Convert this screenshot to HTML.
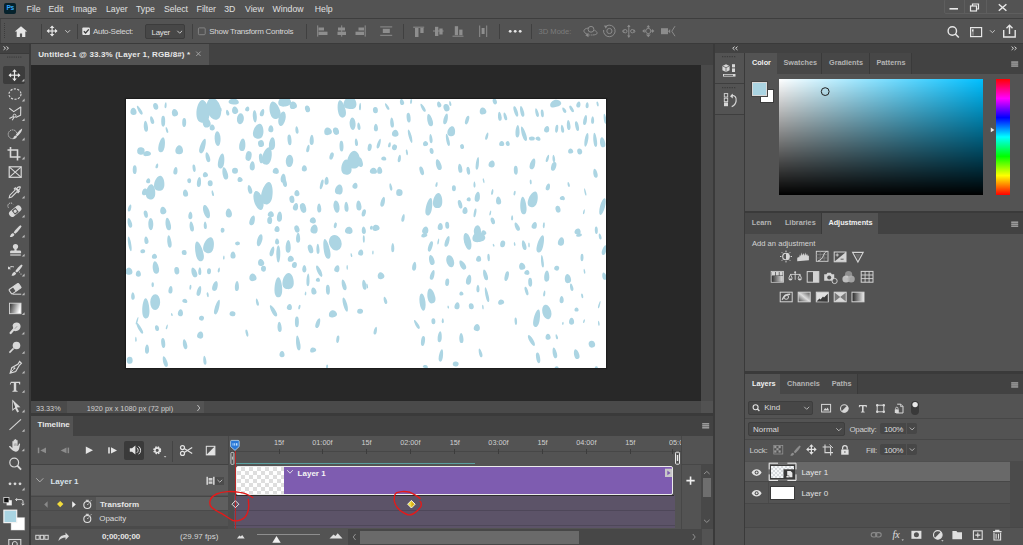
<!DOCTYPE html><html><head><meta charset="utf-8"><style>
*{margin:0;padding:0;box-sizing:border-box}
html,body{width:1023px;height:545px;overflow:hidden;background:#535353;font-family:"Liberation Sans",sans-serif;color:#d8d8d8}
.ab{position:absolute}
.t{position:absolute;white-space:nowrap;line-height:1}
#ov{position:absolute;left:0;top:0;overflow:visible}
</style></head><body>
<div class="ab" style="left:0px;top:0px;width:1023px;height:18px;background:#535353;"></div>
<div class="ab" style="left:0px;top:18px;width:1023px;height:1px;background:#3e3e3e;"></div>
<div class="ab" style="left:4px;top:3px;width:11.8px;height:10.8px;background:#06222c;border-radius:2px"></div>
<div class="ab" style="left:943.5px;top:-1px;width:80px;height:14.5px;background:transparent;border:1px solid #5e5e5e;border-radius:2px"></div>
<div class="ab" style="left:964px;top:0px;width:1px;height:13px;background:#5e5e5e;"></div>
<div class="ab" style="left:985.5px;top:0px;width:1px;height:13px;background:#5e5e5e;"></div>
<div class="ab" style="left:0px;top:19px;width:1023px;height:24px;background:#535353;"></div>
<div class="ab" style="left:0px;top:43px;width:1023px;height:1px;background:#3a3a3a;"></div>
<div class="ab" style="left:0px;top:19px;width:1px;height:24px;background:#444444;"></div>
<div class="ab" style="left:40.5px;top:23.5px;width:1px;height:15.5px;background:#404040;"></div>
<div class="ab" style="left:76.6px;top:23.5px;width:1px;height:15.5px;background:#404040;"></div>
<div class="ab" style="left:192px;top:23.5px;width:1px;height:15.5px;background:#404040;"></div>
<div class="ab" style="left:305.9px;top:23.5px;width:1px;height:15.5px;background:#404040;"></div>
<div class="ab" style="left:402.6px;top:23.5px;width:1px;height:15.5px;background:#404040;"></div>
<div class="ab" style="left:499.4px;top:23.5px;width:1px;height:15.5px;background:#404040;"></div>
<div class="ab" style="left:531.3px;top:23.5px;width:1px;height:15.5px;background:#404040;"></div>
<div class="ab" style="left:144.8px;top:24.3px;width:40.6px;height:15.2px;background:#474747;border:1px solid #3c3c3c;border-radius:2px"></div>
<div class="ab" style="left:0px;top:44px;width:29px;height:9px;background:#424242;"></div>
<div class="ab" style="left:0px;top:53px;width:29px;height:1px;background:#3a3a3a;"></div>
<div class="ab" style="left:29px;top:44px;width:2px;height:501px;background:#3a3a3a;"></div>
<div class="ab" style="left:31px;top:44px;width:682px;height:21px;background:#424242;"></div>
<div class="ab" style="left:31px;top:44px;width:178px;height:21px;background:#535353;"></div>
<div class="ab" style="left:31px;top:65px;width:682px;height:336px;background:#282828;"></div>
<div class="ab" style="left:126px;top:99px;width:480px;height:269px;background:#ffffff;box-shadow:0 0 1px 1px #1c1c1c"></div>
<svg class="ab" style="left:0;top:0" width="1023" height="545"><defs><clipPath id="cv"><rect x="126" y="99" width="480" height="269"/></clipPath></defs><g clip-path="url(#cv)" fill="#acd5e3"><path d="M133.43 107.85C134.98 107.85 136.52 109.97 136.52 112.27C136.52 114.21 135.13 114.92 133.43 114.92C131.73 114.92 130.34 114.21 130.34 112.27C130.34 109.97 131.88 107.85 133.43 107.85z" transform="rotate(-6 133.4 111.4)"/><path d="M139.62 105.09C140.40 105.09 141.17 108.12 141.17 111.41C141.17 114.19 140.47 115.20 139.62 115.20C138.77 115.20 138.08 114.19 138.08 111.41C138.08 108.12 138.85 105.09 139.62 105.09z" transform="rotate(-30 139.6 110.1)"/><ellipse cx="155.7" cy="106.4" rx="2.48" ry="3.47" transform="rotate(-13 155.7 106.4)"/><path d="M165.63 102.16C166.14 102.16 166.66 103.98 166.66 105.95C166.66 107.62 166.20 108.22 165.63 108.22C165.06 108.22 164.60 107.62 164.60 105.95C164.60 103.98 165.11 102.16 165.63 102.16z" transform="rotate(5 165.6 105.2)"/><path d="M174.79 108.83C176.34 108.83 177.88 111.11 177.88 113.57C177.88 115.65 176.49 116.41 174.79 116.41C173.09 116.41 171.70 115.65 171.70 113.57C171.70 111.11 173.25 108.83 174.79 108.83z" transform="rotate(-15 174.8 112.6)"/><ellipse cx="184.2" cy="122.5" rx="1.98" ry="4.46" transform="rotate(1 184.2 122.5)"/><path d="M145.81 120.69C146.84 120.69 147.87 124.02 147.87 127.63C147.87 130.69 146.95 131.80 145.81 131.80C144.68 131.80 143.75 130.69 143.75 127.63C143.75 124.02 144.78 120.69 145.81 120.69z" transform="rotate(-5 145.8 126.2)"/><path d="M152.01 116.01C152.91 116.01 153.81 118.44 153.81 121.06C153.81 123.29 153.00 124.09 152.01 124.09C151.01 124.09 150.20 123.29 150.20 121.06C150.20 118.44 151.10 116.01 152.01 116.01z" transform="rotate(-16 152.0 120.1)"/><ellipse cx="163.2" cy="121.3" rx="1.98" ry="5.45" transform="rotate(0 163.2 121.3)"/><path d="M166.87 126.93C167.38 126.93 167.90 128.75 167.90 130.72C167.90 132.39 167.43 132.99 166.87 132.99C166.30 132.99 165.84 132.39 165.84 130.72C165.84 128.75 166.35 126.93 166.87 126.93z" transform="rotate(-17 166.9 130.0)"/><path d="M202.78 100.02C206.00 100.02 209.22 106.84 209.22 114.23C209.22 120.48 206.32 122.75 202.78 122.75C199.24 122.75 196.34 120.48 196.34 114.23C196.34 106.84 199.56 100.02 202.78 100.02z" transform="rotate(-2 202.8 111.4)"/><ellipse cx="213.9" cy="108.9" rx="6.93" ry="11.15" transform="rotate(-15 213.9 108.9)"/><path d="M206.50 117.48C208.43 117.48 210.36 120.51 210.36 123.79C210.36 126.57 208.62 127.58 206.50 127.58C204.37 127.58 202.63 126.57 202.63 123.79C202.63 120.51 204.56 117.48 206.50 117.48z" transform="rotate(-15 206.5 122.5)"/><path d="M212.19 124.45C213.48 124.45 214.77 126.27 214.77 128.24C214.77 129.91 213.61 130.51 212.19 130.51C210.78 130.51 209.62 129.91 209.62 128.24C209.62 126.27 210.90 124.45 212.19 124.45z" transform="rotate(-3 212.2 127.5)"/><ellipse cx="220.1" cy="110.1" rx="1.49" ry="2.48" transform="rotate(12 220.1 110.1)"/><path d="M227.55 109.59C228.32 109.59 229.09 111.41 229.09 113.38C229.09 115.05 228.40 115.65 227.55 115.65C226.70 115.65 226.00 115.05 226.00 113.38C226.00 111.41 226.78 109.59 227.55 109.59z" transform="rotate(-14 227.5 112.6)"/><path d="M234.98 106.36C236.52 106.36 238.07 108.63 238.07 111.09C238.07 113.18 236.68 113.93 234.98 113.93C233.28 113.93 231.89 113.18 231.89 111.09C231.89 108.63 233.43 106.36 234.98 106.36z" transform="rotate(-10 235.0 110.1)"/><ellipse cx="240.4" cy="118.8" rx="3.47" ry="5.45" transform="rotate(5 240.4 118.8)"/><path d="M247.36 106.38C248.39 106.38 249.42 107.90 249.42 109.54C249.42 110.93 248.50 111.43 247.36 111.43C246.23 111.43 245.30 110.93 245.30 109.54C245.30 107.90 246.33 106.38 247.36 106.38z" transform="rotate(16 247.4 108.9)"/><path d="M233.74 98.45C236.32 98.45 238.89 100.26 238.89 102.23C238.89 103.90 236.57 104.51 233.74 104.51C230.91 104.51 228.59 103.90 228.59 102.23C228.59 100.26 231.16 98.45 233.74 98.45z" transform="rotate(3 233.7 101.5)"/><ellipse cx="254.8" cy="116.3" rx="1.98" ry="6.19" transform="rotate(-4 254.8 116.3)"/><path d="M262.22 108.83C263.25 108.83 264.28 111.11 264.28 113.57C264.28 115.65 263.36 116.41 262.22 116.41C261.09 116.41 260.16 115.65 260.16 113.57C260.16 111.11 261.19 108.83 262.22 108.83z" transform="rotate(17 262.2 112.6)"/><path d="M274.61 101.30C277.18 101.30 279.76 106.61 279.76 112.36C279.76 117.22 277.44 118.99 274.61 118.99C271.77 118.99 269.46 117.22 269.46 112.36C269.46 106.61 272.03 101.30 274.61 101.30z" transform="rotate(-16 274.6 110.1)"/><ellipse cx="282.0" cy="118.8" rx="3.47" ry="7.43" transform="rotate(13 282.0 118.8)"/><path d="M284.51 96.42C287.73 96.42 290.95 99.46 290.95 102.74C290.95 105.52 288.06 106.53 284.51 106.53C280.97 106.53 278.07 105.52 278.07 102.74C278.07 99.46 281.29 96.42 284.51 96.42z" transform="rotate(-8 284.5 101.5)"/><path d="M293.18 101.40C294.99 101.40 296.79 103.68 296.79 106.14C296.79 108.22 295.17 108.98 293.18 108.98C291.20 108.98 289.58 108.22 289.58 106.14C289.58 103.68 291.38 101.40 293.18 101.40z" transform="rotate(-13 293.2 105.2)"/><ellipse cx="307.5" cy="108.9" rx="2.48" ry="3.47" transform="rotate(-14 307.5 108.9)"/><path d="M296.90 126.17C297.67 126.17 298.44 128.44 298.44 130.91C298.44 132.99 297.75 133.75 296.90 133.75C296.05 133.75 295.35 132.99 295.35 130.91C295.35 128.44 296.13 126.17 296.90 126.17z" transform="rotate(-7 296.9 130.0)"/><path d="M258.51 123.62C261.08 123.62 263.66 128.17 263.66 133.09C263.66 137.26 261.34 138.78 258.51 138.78C255.67 138.78 253.36 137.26 253.36 133.09C253.36 128.17 255.93 123.62 258.51 123.62z" transform="rotate(11 258.5 131.2)"/><ellipse cx="261.0" cy="143.6" rx="2.97" ry="3.47" transform="rotate(-11 261.0 143.6)"/><path d="M270.89 125.18C272.18 125.18 273.47 127.31 273.47 129.61C273.47 131.55 272.31 132.26 270.89 132.26C269.47 132.26 268.32 131.55 268.32 129.61C268.32 127.31 269.60 125.18 270.89 125.18z" transform="rotate(3 270.9 128.7)"/><path d="M272.13 137.27C273.68 137.27 275.22 141.06 275.22 145.16C275.22 148.63 273.83 149.90 272.13 149.90C270.43 149.90 269.04 148.63 269.04 145.16C269.04 141.06 270.58 137.27 272.13 137.27z" transform="rotate(5 272.1 143.6)"/><ellipse cx="289.5" cy="139.9" rx="1.98" ry="5.45" transform="rotate(-5 289.5 139.9)"/><path d="M311.76 134.81C312.79 134.81 313.82 137.85 313.82 141.13C313.82 143.91 312.89 144.92 311.76 144.92C310.63 144.92 309.70 143.91 309.70 141.13C309.70 137.85 310.73 134.81 311.76 134.81z" transform="rotate(2 311.8 139.9)"/><path d="M327.86 127.41C329.79 127.41 331.72 129.68 331.72 132.15C331.72 134.23 329.98 134.99 327.86 134.99C325.73 134.99 323.99 134.23 323.99 132.15C323.99 129.68 325.93 127.41 327.86 127.41z" transform="rotate(-16 327.9 131.2)"/><ellipse cx="336.0" cy="131.2" rx="2.97" ry="3.72" transform="rotate(-16 336.0 131.2)"/><path d="M341.48 100.07C343.41 100.07 345.34 105.37 345.34 111.12C345.34 115.98 343.60 117.75 341.48 117.75C339.35 117.75 337.62 115.98 337.62 111.12C337.62 105.37 339.55 100.07 341.48 100.07z" transform="rotate(-11 341.5 108.9)"/><path d="M350.15 96.40C353.37 96.40 356.59 100.19 356.59 104.29C356.59 107.77 353.69 109.03 350.15 109.03C346.61 109.03 343.71 107.77 343.71 104.29C343.71 100.19 346.93 96.40 350.15 96.40z" transform="rotate(6 350.1 102.7)"/><ellipse cx="352.6" cy="123.8" rx="2.97" ry="6.19" transform="rotate(-3 352.6 123.8)"/><path d="M358.82 122.46C359.59 122.46 360.36 124.73 360.36 127.19C360.36 129.28 359.67 130.03 358.82 130.03C357.97 130.03 357.27 129.28 357.27 127.19C357.27 124.73 358.04 122.46 358.82 122.46z" transform="rotate(-7 358.8 126.2)"/><path d="M360.06 102.64C360.57 102.64 361.09 104.91 361.09 107.38C361.09 109.46 360.62 110.22 360.06 110.22C359.49 110.22 359.03 109.46 359.03 107.38C359.03 104.91 359.54 102.64 360.06 102.64z" transform="rotate(3 360.1 106.4)"/><ellipse cx="341.5" cy="146.1" rx="1.98" ry="5.45" transform="rotate(-2 341.5 146.1)"/><path d="M356.34 138.55C357.11 138.55 357.89 140.83 357.89 143.29C357.89 145.38 357.19 146.13 356.34 146.13C355.49 146.13 354.80 145.38 354.80 143.29C354.80 140.83 355.57 138.55 356.34 138.55z" transform="rotate(-7 356.3 142.3)"/><path d="M161.91 137.24C163.46 137.24 165.00 141.79 165.00 146.72C165.00 150.88 163.61 152.40 161.91 152.40C160.21 152.40 158.82 150.88 158.82 146.72C158.82 141.79 160.37 137.24 161.91 137.24z" transform="rotate(11 161.9 144.8)"/><ellipse cx="140.9" cy="151.0" rx="3.72" ry="3.72" transform="rotate(7 140.9 151.0)"/><path d="M147.05 150.96C148.98 150.96 150.92 152.48 150.92 154.12C150.92 155.51 149.18 156.02 147.05 156.02C144.93 156.02 143.19 155.51 143.19 154.12C143.19 152.48 145.12 150.96 147.05 150.96z" transform="rotate(-9 147.1 153.5)"/><path d="M179.25 145.23C181.18 145.23 183.11 147.96 183.11 150.91C183.11 153.41 181.38 154.32 179.25 154.32C177.13 154.32 175.39 153.41 175.39 150.91C175.39 147.96 177.32 145.23 179.25 145.23z" transform="rotate(3 179.3 149.8)"/><ellipse cx="134.7" cy="169.6" rx="1.98" ry="4.46" transform="rotate(1 134.7 169.6)"/><path d="M156.96 163.35C157.60 163.35 158.25 164.86 158.25 166.50C158.25 167.89 157.67 168.40 156.96 168.40C156.25 168.40 155.67 167.89 155.67 166.50C155.67 164.86 156.32 163.35 156.96 163.35z" transform="rotate(14 157.0 165.9)"/><path d="M175.54 167.04C176.57 167.04 177.60 169.31 177.60 171.77C177.60 173.86 176.67 174.62 175.54 174.62C174.40 174.62 173.47 173.86 173.47 171.77C173.47 169.31 174.51 167.04 175.54 167.04z" transform="rotate(8 175.5 170.8)"/><ellipse cx="194.1" cy="168.3" rx="1.49" ry="3.72" transform="rotate(-8 194.1 168.3)"/><path d="M202.78 138.48C204.07 138.48 205.36 143.03 205.36 147.95C205.36 152.12 204.20 153.64 202.78 153.64C201.36 153.64 200.20 152.12 200.20 147.95C200.20 143.03 201.49 138.48 202.78 138.48z" transform="rotate(17 202.8 146.1)"/><path d="M207.73 152.15C208.76 152.15 209.79 155.18 209.79 158.47C209.79 161.25 208.87 162.26 207.73 162.26C206.60 162.26 205.67 161.25 205.67 158.47C205.67 155.18 206.70 152.15 207.73 152.15z" transform="rotate(-14 207.7 157.2)"/><ellipse cx="217.6" cy="138.6" rx="2.97" ry="7.43" transform="rotate(-3 217.6 138.6)"/><path d="M221.36 153.34C222.90 153.34 224.45 157.89 224.45 162.81C224.45 166.98 223.06 168.50 221.36 168.50C219.66 168.50 218.27 166.98 218.27 162.81C218.27 157.89 219.81 153.34 221.36 153.34z" transform="rotate(9 221.4 160.9)"/><path d="M225.07 166.99C226.36 166.99 227.65 170.78 227.65 174.88C227.65 178.36 226.49 179.62 225.07 179.62C223.65 179.62 222.50 178.36 222.50 174.88C222.50 170.78 223.78 166.99 225.07 166.99z" transform="rotate(-13 225.1 173.3)"/><ellipse cx="235.0" cy="170.8" rx="2.97" ry="2.97" transform="rotate(-0 235.0 170.8)"/><path d="M239.93 176.97C241.22 176.97 242.51 178.48 242.51 180.13C242.51 181.52 241.35 182.02 239.93 182.02C238.52 182.02 237.36 181.52 237.36 180.13C237.36 178.48 238.64 176.97 239.93 176.97z" transform="rotate(-17 239.9 179.5)"/><path d="M242.41 138.50C243.95 138.50 245.50 142.29 245.50 146.40C245.50 149.87 244.11 151.14 242.41 151.14C240.71 151.14 239.32 149.87 239.32 146.40C239.32 142.29 240.86 138.50 242.41 138.50z" transform="rotate(6 242.4 144.8)"/><ellipse cx="248.6" cy="156.0" rx="2.97" ry="4.95" transform="rotate(10 248.6 156.0)"/><path d="M252.32 161.33C253.60 161.33 254.89 164.05 254.89 167.01C254.89 169.51 253.73 170.42 252.32 170.42C250.90 170.42 249.74 169.51 249.74 167.01C249.74 164.05 251.03 161.33 252.32 161.33z" transform="rotate(3 252.3 165.9)"/><path d="M267.18 147.12C269.49 147.12 271.81 152.43 271.81 158.18C271.81 163.04 269.73 164.81 267.18 164.81C264.63 164.81 262.54 163.04 262.54 158.18C262.54 152.43 264.86 147.12 267.18 147.12z" transform="rotate(14 267.2 156.0)"/><ellipse cx="261.0" cy="158.4" rx="1.98" ry="4.95" transform="rotate(-7 261.0 158.4)"/><path d="M275.85 167.80C277.39 167.80 278.94 169.61 278.94 171.58C278.94 173.25 277.55 173.86 275.85 173.86C274.15 173.86 272.75 173.25 272.75 171.58C272.75 169.61 274.30 167.80 275.85 167.80z" transform="rotate(7 275.8 170.8)"/><path d="M283.28 173.71C284.56 173.71 285.85 176.44 285.85 179.39C285.85 181.89 284.69 182.80 283.28 182.80C281.86 182.80 280.70 181.89 280.70 179.39C280.70 176.44 281.99 173.71 283.28 173.71z" transform="rotate(3 283.3 178.3)"/><ellipse cx="289.5" cy="160.9" rx="3.72" ry="6.19" transform="rotate(3 289.5 160.9)"/><path d="M304.33 165.32C305.62 165.32 306.90 167.14 306.90 169.11C306.90 170.78 305.74 171.38 304.33 171.38C302.91 171.38 301.75 170.78 301.75 169.11C301.75 167.14 303.04 165.32 304.33 165.32z" transform="rotate(-2 304.3 168.3)"/><path d="M308.04 144.75C308.82 144.75 309.59 147.02 309.59 149.48C309.59 151.57 308.89 152.33 308.04 152.33C307.19 152.33 306.50 151.57 306.50 149.48C306.50 147.02 307.27 144.75 308.04 144.75z" transform="rotate(12 308.0 148.5)"/><ellipse cx="331.6" cy="156.0" rx="1.98" ry="3.72" transform="rotate(16 331.6 156.0)"/><path d="M346.43 159.53C349.01 159.53 351.59 164.08 351.59 169.01C351.59 173.17 349.27 174.69 346.43 174.69C343.60 174.69 341.28 173.17 341.28 169.01C341.28 164.08 343.86 159.53 346.43 159.53z" transform="rotate(-1 346.4 167.1)"/><path d="M353.86 150.84C357.08 150.84 360.30 156.14 360.30 161.89C360.30 166.75 357.41 168.52 353.86 168.52C350.32 168.52 347.42 166.75 347.42 161.89C347.42 156.14 350.64 150.84 353.86 150.84z" transform="rotate(6 353.9 159.7)"/><ellipse cx="360.1" cy="162.2" rx="2.48" ry="4.95" transform="rotate(-16 360.1 162.2)"/><path d="M159.44 175.63C162.01 175.63 164.59 180.18 164.59 185.11C164.59 189.27 162.27 190.79 159.44 190.79C156.60 190.79 154.28 189.27 154.28 185.11C154.28 180.18 156.86 175.63 159.44 175.63z" transform="rotate(7 159.4 183.2)"/><path d="M150.77 184.30C153.09 184.30 155.40 188.85 155.40 193.77C155.40 197.94 153.32 199.46 150.77 199.46C148.22 199.46 146.13 197.94 146.13 193.77C146.13 188.85 148.45 184.30 150.77 184.30z" transform="rotate(5 150.8 191.9)"/><ellipse cx="144.6" cy="191.9" rx="2.48" ry="3.47" transform="rotate(18 144.6 191.9)"/><path d="M148.29 178.21C149.32 178.21 150.35 179.72 150.35 181.37C150.35 182.75 149.42 183.26 148.29 183.26C147.16 183.26 146.23 182.75 146.23 181.37C146.23 179.72 147.26 178.21 148.29 178.21z" transform="rotate(12 148.3 180.7)"/><path d="M185.44 189.58C186.73 189.58 188.02 191.70 188.02 194.00C188.02 195.95 186.86 196.65 185.44 196.65C184.03 196.65 182.87 195.95 182.87 194.00C182.87 191.70 184.15 189.58 185.44 189.58z" transform="rotate(-8 185.4 193.1)"/><ellipse cx="189.2" cy="180.7" rx="1.98" ry="2.48" transform="rotate(-4 189.2 180.7)"/><path d="M199.07 176.92C200.10 176.92 201.13 179.95 201.13 183.24C201.13 186.01 200.20 187.02 199.07 187.02C197.93 187.02 197.00 186.01 197.00 183.24C197.00 179.95 198.03 176.92 199.07 176.92z" transform="rotate(6 199.1 182.0)"/><path d="M205.26 172.02C206.54 172.02 207.83 173.53 207.83 175.17C207.83 176.56 206.67 177.07 205.26 177.07C203.84 177.07 202.68 176.56 202.68 175.17C202.68 173.53 203.97 172.02 205.26 172.02z" transform="rotate(-17 205.3 174.5)"/><ellipse cx="210.2" cy="183.2" rx="2.48" ry="2.97" transform="rotate(-1 210.2 183.2)"/><path d="M212.69 190.09C213.20 190.09 213.72 191.91 213.72 193.88C213.72 195.54 213.25 196.15 212.69 196.15C212.12 196.15 211.66 195.54 211.66 193.88C211.66 191.91 212.17 190.09 212.69 190.09z" transform="rotate(-12 212.7 193.1)"/><path d="M249.84 184.86C250.87 184.86 251.90 187.58 251.90 190.54C251.90 193.04 250.97 193.95 249.84 193.95C248.71 193.95 247.78 193.04 247.78 190.54C247.78 187.58 248.81 184.86 249.84 184.86z" transform="rotate(-14 249.8 189.4)"/><ellipse cx="258.5" cy="200.5" rx="4.46" ry="9.91" transform="rotate(-16 258.5 200.5)"/><path d="M267.18 181.75C270.01 181.75 272.84 188.57 272.84 195.96C272.84 202.21 270.29 204.49 267.18 204.49C264.06 204.49 261.51 202.21 261.51 195.96C261.51 188.57 264.34 181.75 267.18 181.75z" transform="rotate(10 267.2 193.1)"/><path d="M284.51 176.92C285.54 176.92 286.57 179.95 286.57 183.24C286.57 186.01 285.65 187.02 284.51 187.02C283.38 187.02 282.45 186.01 282.45 183.24C282.45 179.95 283.48 176.92 284.51 176.92z" transform="rotate(-13 284.5 182.0)"/><ellipse cx="291.9" cy="199.3" rx="2.48" ry="3.72" transform="rotate(-9 291.9 199.3)"/><path d="M296.90 190.09C298.19 190.09 299.47 191.91 299.47 193.88C299.47 195.54 298.31 196.15 296.90 196.15C295.48 196.15 294.32 195.54 294.32 193.88C294.32 191.91 295.61 190.09 296.90 190.09z" transform="rotate(-4 296.9 193.1)"/><path d="M295.66 202.95C296.95 202.95 298.24 205.22 298.24 207.69C298.24 209.77 297.08 210.53 295.66 210.53C294.24 210.53 293.08 209.77 293.08 207.69C293.08 205.22 294.37 202.95 295.66 202.95z" transform="rotate(13 295.7 206.7)"/><ellipse cx="303.1" cy="208.0" rx="2.97" ry="4.95" transform="rotate(-15 303.1 208.0)"/><path d="M319.19 203.43C320.22 203.43 321.25 206.16 321.25 209.12C321.25 211.62 320.32 212.53 319.19 212.53C318.06 212.53 317.13 211.62 317.13 209.12C317.13 206.16 318.16 203.43 319.19 203.43z" transform="rotate(-2 319.2 208.0)"/><path d="M326.62 176.69C327.65 176.69 328.68 179.12 328.68 181.74C328.68 183.97 327.75 184.78 326.62 184.78C325.49 184.78 324.56 183.97 324.56 181.74C324.56 179.12 325.59 176.69 326.62 176.69z" transform="rotate(2 326.6 180.7)"/><ellipse cx="321.7" cy="184.4" rx="1.49" ry="4.95" transform="rotate(14 321.7 184.4)"/><path d="M339.00 184.35C340.93 184.35 342.87 187.38 342.87 190.67C342.87 193.44 341.13 194.46 339.00 194.46C336.88 194.46 335.14 193.44 335.14 190.67C335.14 187.38 337.07 184.35 339.00 184.35z" transform="rotate(11 339.0 189.4)"/><path d="M355.10 182.66C356.39 182.66 357.68 184.47 357.68 186.45C357.68 188.11 356.52 188.72 355.10 188.72C353.69 188.72 352.53 188.11 352.53 186.45C352.53 184.47 353.81 182.66 355.10 182.66z" transform="rotate(13 355.1 185.7)"/><ellipse cx="336.5" cy="206.7" rx="2.97" ry="6.19" transform="rotate(-8 336.5 206.7)"/><path d="M346.43 201.69C347.46 201.69 348.49 204.72 348.49 208.00C348.49 210.78 347.57 211.79 346.43 211.79C345.30 211.79 344.37 210.78 344.37 208.00C344.37 204.72 345.40 201.69 346.43 201.69z" transform="rotate(-3 346.4 206.7)"/><path d="M358.82 200.45C360.11 200.45 361.39 203.48 361.39 206.76C361.39 209.54 360.23 210.55 358.82 210.55C357.40 210.55 356.24 209.54 356.24 206.76C356.24 203.48 357.53 200.45 358.82 200.45z" transform="rotate(-5 358.8 205.5)"/><ellipse cx="363.8" cy="212.9" rx="1.98" ry="3.72" transform="rotate(14 363.8 212.9)"/><path d="M129.72 204.44C130.49 204.44 131.26 206.56 131.26 208.86C131.26 210.81 130.57 211.52 129.72 211.52C128.87 211.52 128.17 210.81 128.17 208.86C128.17 206.56 128.94 204.44 129.72 204.44z" transform="rotate(16 129.7 208.0)"/><path d="M129.72 217.79C130.75 217.79 131.78 220.82 131.78 224.10C131.78 226.88 130.85 227.89 129.72 227.89C128.58 227.89 127.65 226.88 127.65 224.10C127.65 220.82 128.68 217.79 129.72 217.79z" transform="rotate(-13 129.7 222.8)"/><ellipse cx="145.8" cy="214.2" rx="1.98" ry="3.72" transform="rotate(-12 145.8 214.2)"/><path d="M163.15 206.67C164.70 206.67 166.24 208.94 166.24 211.40C166.24 213.49 164.85 214.24 163.15 214.24C161.45 214.24 160.06 213.49 160.06 211.40C160.06 208.94 161.61 206.67 163.15 206.67z" transform="rotate(-10 163.2 210.5)"/><path d="M168.11 217.76C169.39 217.76 170.68 221.55 170.68 225.66C170.68 229.13 169.52 230.39 168.11 230.39C166.69 230.39 165.53 229.13 165.53 225.66C165.53 221.55 166.82 217.76 168.11 217.76z" transform="rotate(-10 168.1 224.1)"/><ellipse cx="150.8" cy="224.1" rx="2.48" ry="6.19" transform="rotate(-1 150.8 224.1)"/><path d="M190.40 211.62C191.43 211.62 192.46 213.89 192.46 216.36C192.46 218.44 191.53 219.20 190.40 219.20C189.26 219.20 188.34 218.44 188.34 216.36C188.34 213.89 189.37 211.62 190.40 211.62z" transform="rotate(3 190.4 215.4)"/><path d="M191.63 221.50C192.67 221.50 193.70 224.53 193.70 227.82C193.70 230.60 192.77 231.61 191.63 231.61C190.50 231.61 189.57 230.60 189.57 227.82C189.57 224.53 190.60 221.50 191.63 221.50z" transform="rotate(-9 191.6 226.6)"/><ellipse cx="206.5" cy="211.7" rx="2.97" ry="6.93" transform="rotate(-18 206.5 211.7)"/><path d="M205.26 221.53C206.03 221.53 206.80 223.80 206.80 226.26C206.80 228.35 206.11 229.11 205.26 229.11C204.41 229.11 203.71 228.35 203.71 226.26C203.71 223.80 204.48 221.53 205.26 221.53z" transform="rotate(-3 205.3 225.3)"/><path d="M228.79 208.38C230.33 208.38 231.88 211.11 231.88 214.07C231.88 216.57 230.49 217.48 228.79 217.48C227.09 217.48 225.70 216.57 225.70 214.07C225.70 211.11 227.24 208.38 228.79 208.38z" transform="rotate(-5 228.8 212.9)"/><ellipse cx="222.6" cy="230.3" rx="1.98" ry="2.48" transform="rotate(2 222.6 230.3)"/><path d="M252.32 215.31C253.60 215.31 254.89 218.34 254.89 221.63C254.89 224.40 253.73 225.41 252.32 225.41C250.90 225.41 249.74 224.40 249.74 221.63C249.74 218.34 251.03 215.31 252.32 215.31z" transform="rotate(16 252.3 220.4)"/><path d="M270.89 211.14C272.44 211.14 273.98 212.96 273.98 214.93C273.98 216.60 272.59 217.20 270.89 217.20C269.19 217.20 267.80 216.60 267.80 214.93C267.80 212.96 269.35 211.14 270.89 211.14z" transform="rotate(7 270.9 214.2)"/><ellipse cx="269.7" cy="220.4" rx="2.48" ry="3.72" transform="rotate(1 269.7 220.4)"/><path d="M279.56 211.59C280.85 211.59 282.14 214.63 282.14 217.91C282.14 220.69 280.98 221.70 279.56 221.70C278.14 221.70 276.98 220.69 276.98 217.91C276.98 214.63 278.27 211.59 279.56 211.59z" transform="rotate(4 279.6 216.6)"/><path d="M277.08 226.00C278.37 226.00 279.66 227.82 279.66 229.79C279.66 231.46 278.50 232.06 277.08 232.06C275.67 232.06 274.51 231.46 274.51 229.79C274.51 227.82 275.80 226.00 277.08 226.00z" transform="rotate(6 277.1 229.0)"/><ellipse cx="296.9" cy="229.0" rx="2.48" ry="3.72" transform="rotate(-16 296.9 229.0)"/><path d="M313.00 217.33C314.54 217.33 316.09 219.15 316.09 221.12C316.09 222.79 314.70 223.39 313.00 223.39C311.30 223.39 309.91 222.79 309.91 221.12C309.91 219.15 311.45 217.33 313.00 217.33z" transform="rotate(14 313.0 220.4)"/><path d="M314.24 224.48C316.04 224.48 317.84 227.21 317.84 230.17C317.84 232.67 316.22 233.58 314.24 233.58C312.25 233.58 310.63 232.67 310.63 230.17C310.63 227.21 312.43 224.48 314.24 224.48z" transform="rotate(10 314.2 229.0)"/><ellipse cx="335.3" cy="225.3" rx="1.49" ry="2.97" transform="rotate(13 335.3 225.3)"/><path d="M348.91 226.73C350.84 226.73 352.77 228.85 352.77 231.15C352.77 233.10 351.04 233.81 348.91 233.81C346.79 233.81 345.05 233.10 345.05 231.15C345.05 228.85 346.98 226.73 348.91 226.73z" transform="rotate(11 348.9 230.3)"/><path d="M363.77 226.48C364.80 226.48 365.83 228.75 365.83 231.22C365.83 233.30 364.90 234.06 363.77 234.06C362.64 234.06 361.71 233.30 361.71 231.22C361.71 228.75 362.74 226.48 363.77 226.48z" transform="rotate(-4 363.8 230.3)"/><ellipse cx="375.4" cy="110.1" rx="2.48" ry="3.22" transform="rotate(-4 375.4 110.1)"/><path d="M387.05 102.64C387.70 102.64 388.34 104.91 388.34 107.38C388.34 109.46 387.76 110.22 387.05 110.22C386.34 110.22 385.76 109.46 385.76 107.38C385.76 104.91 386.41 102.64 387.05 102.64z" transform="rotate(-30 387.1 106.4)"/><path d="M401.91 98.94C402.94 98.94 403.97 100.76 403.97 102.73C403.97 104.40 403.05 105.00 401.91 105.00C400.78 105.00 399.85 104.40 399.85 102.73C399.85 100.76 400.88 98.94 401.91 98.94z" transform="rotate(-14 401.9 102.0)"/><ellipse cx="411.1" cy="101.5" rx="0.99" ry="2.48" transform="rotate(5 411.1 101.5)"/><path d="M422.97 103.12C423.74 103.12 424.51 105.85 424.51 108.81C424.51 111.31 423.82 112.22 422.97 112.22C422.12 112.22 421.42 111.31 421.42 108.81C421.42 105.85 422.19 103.12 422.97 103.12z" transform="rotate(-30 423.0 107.7)"/><path d="M439.07 101.42C440.10 101.42 441.13 103.24 441.13 105.21C441.13 106.87 440.20 107.48 439.07 107.48C437.93 107.48 437.00 106.87 437.00 105.21C437.00 103.24 438.03 101.42 439.07 101.42z" transform="rotate(-16 439.1 104.4)"/><ellipse cx="446.5" cy="107.7" rx="2.97" ry="3.72" transform="rotate(-16 446.5 107.7)"/><path d="M450.21 100.93C450.73 100.93 451.24 102.45 451.24 104.09C451.24 105.48 450.78 105.98 450.21 105.98C449.64 105.98 449.18 105.48 449.18 104.09C449.18 102.45 449.70 100.93 450.21 100.93z" transform="rotate(-10 450.2 103.5)"/><path d="M482.90 107.35C484.58 107.35 486.25 109.47 486.25 111.77C486.25 113.72 484.75 114.43 482.90 114.43C481.06 114.43 479.56 113.72 479.56 111.77C479.56 109.47 481.23 107.35 482.90 107.35z" transform="rotate(-12 482.9 110.9)"/><ellipse cx="494.8" cy="101.5" rx="1.98" ry="2.97" transform="rotate(-20 494.8 101.5)"/><path d="M499.75 111.79C500.65 111.79 501.55 114.52 501.55 117.47C501.55 119.98 500.74 120.88 499.75 120.88C498.75 120.88 497.94 119.98 497.94 117.47C497.94 114.52 498.84 111.79 499.75 111.79z" transform="rotate(-6 499.7 116.3)"/><path d="M505.20 112.30C505.97 112.30 506.74 114.72 506.74 117.35C506.74 119.57 506.05 120.38 505.20 120.38C504.35 120.38 503.65 119.57 503.65 117.35C503.65 114.72 504.42 112.30 505.20 112.30z" transform="rotate(-16 505.2 116.3)"/><ellipse cx="515.8" cy="111.4" rx="1.73" ry="5.45" transform="rotate(-18 515.8 111.4)"/><path d="M522.04 105.83C522.94 105.83 523.84 109.16 523.84 112.77C523.84 115.83 523.03 116.94 522.04 116.94C521.05 116.94 520.23 115.83 520.23 112.77C520.23 109.16 521.14 105.83 522.04 105.83z" transform="rotate(-13 522.0 111.4)"/><path d="M536.90 108.07C537.67 108.07 538.44 110.80 538.44 113.76C538.44 116.26 537.75 117.17 536.90 117.17C536.05 117.17 535.35 116.26 535.35 113.76C535.35 110.80 536.13 108.07 536.90 108.07z" transform="rotate(-14 536.9 112.6)"/><ellipse cx="542.3" cy="113.4" rx="1.49" ry="3.96" transform="rotate(-5 542.3 113.4)"/><path d="M555.47 99.92C558.31 99.92 561.14 102.04 561.14 104.34C561.14 106.29 558.59 107.00 555.47 107.00C552.36 107.00 549.81 106.29 549.81 104.34C549.81 102.04 552.64 99.92 555.47 99.92z" transform="rotate(-17 555.5 103.5)"/><path d="M564.14 107.11C564.92 107.11 565.69 108.93 565.69 110.90C565.69 112.57 564.99 113.18 564.14 113.18C563.29 113.18 562.60 112.57 562.60 110.90C562.60 108.93 563.37 107.11 564.14 107.11z" transform="rotate(-30 564.1 110.1)"/><ellipse cx="571.6" cy="108.9" rx="1.49" ry="3.72" transform="rotate(-30 571.6 108.9)"/><path d="M578.51 101.42C579.54 101.42 580.57 103.24 580.57 105.21C580.57 106.87 579.64 107.48 578.51 107.48C577.37 107.48 576.45 106.87 576.45 105.21C576.45 103.24 577.48 101.42 578.51 101.42z" transform="rotate(13 578.5 104.4)"/><path d="M587.18 102.16C587.95 102.16 588.72 103.98 588.72 105.95C588.72 107.62 588.03 108.22 587.18 108.22C586.33 108.22 585.63 107.62 585.63 105.95C585.63 103.98 586.40 102.16 587.18 102.16z" transform="rotate(4 587.2 105.2)"/><ellipse cx="597.6" cy="104.0" rx="0.99" ry="2.48" transform="rotate(-13 597.6 104.0)"/><path d="M605.01 113.76C605.65 113.76 606.30 116.79 606.30 120.08C606.30 122.86 605.72 123.87 605.01 123.87C604.30 123.87 603.72 122.86 603.72 120.08C603.72 116.79 604.37 113.76 605.01 113.76z" transform="rotate(-9 605.0 118.8)"/><path d="M392.01 117.48C392.91 117.48 393.81 120.51 393.81 123.79C393.81 126.57 393.00 127.58 392.01 127.58C391.01 127.58 390.20 126.57 390.20 123.79C390.20 120.51 391.10 117.48 392.01 117.48z" transform="rotate(-5 392.0 122.5)"/><ellipse cx="408.6" cy="117.6" rx="1.98" ry="4.95" transform="rotate(-5 408.6 117.6)"/><path d="M429.90 113.74C431.19 113.74 432.48 117.53 432.48 121.63C432.48 125.11 431.32 126.37 429.90 126.37C428.48 126.37 427.33 125.11 427.33 121.63C427.33 117.53 428.61 113.74 429.90 113.74z" transform="rotate(-14 429.9 120.1)"/><path d="M445.75 113.26C446.78 113.26 447.81 116.59 447.81 120.20C447.81 123.26 446.89 124.37 445.75 124.37C444.62 124.37 443.69 123.26 443.69 120.20C443.69 116.59 444.72 113.26 445.75 113.26z" transform="rotate(13 445.8 118.8)"/><ellipse cx="467.1" cy="120.1" rx="1.73" ry="4.46" transform="rotate(18 467.1 120.1)"/><path d="M375.91 123.69C376.94 123.69 377.97 125.97 377.97 128.43C377.97 130.51 377.04 131.27 375.91 131.27C374.77 131.27 373.85 130.51 373.85 128.43C373.85 125.97 374.88 123.69 375.91 123.69z" transform="rotate(-1 375.9 127.5)"/><path d="M395.23 129.64C396.90 129.64 398.57 131.76 398.57 134.06C398.57 136.01 397.07 136.72 395.23 136.72C393.38 136.72 391.88 136.01 391.88 134.06C391.88 131.76 393.55 129.64 395.23 129.64z" transform="rotate(-1 395.2 133.2)"/><ellipse cx="410.1" cy="136.2" rx="1.49" ry="6.93" transform="rotate(-15 410.1 136.2)"/><path d="M425.44 141.06C426.73 141.06 428.02 142.57 428.02 144.21C428.02 145.60 426.86 146.11 425.44 146.11C424.03 146.11 422.87 145.60 422.87 144.21C422.87 142.57 424.15 141.06 425.44 141.06z" transform="rotate(-14 425.4 143.6)"/><path d="M430.89 134.08C431.66 134.08 432.44 136.81 432.44 139.77C432.44 142.27 431.74 143.18 430.89 143.18C430.04 143.18 429.35 142.27 429.35 139.77C429.35 136.81 430.12 134.08 430.89 134.08z" transform="rotate(-6 430.9 138.6)"/><ellipse cx="431.6" cy="151.0" rx="1.98" ry="2.97" transform="rotate(-8 431.6 151.0)"/><path d="M451.45 126.15C453.38 126.15 455.31 129.18 455.31 132.46C455.31 135.24 453.57 136.25 451.45 136.25C449.32 136.25 447.59 135.24 447.59 132.46C447.59 129.18 449.52 126.15 451.45 126.15z" transform="rotate(12 451.4 131.2)"/><path d="M447.73 133.55C448.51 133.55 449.28 137.34 449.28 141.45C449.28 144.92 448.58 146.18 447.73 146.18C446.88 146.18 446.19 144.92 446.19 141.45C446.19 137.34 446.96 133.55 447.73 133.55z" transform="rotate(-12 447.7 139.9)"/><ellipse cx="462.1" cy="146.6" rx="1.98" ry="2.48" transform="rotate(-17 462.1 146.6)"/><path d="M486.87 132.36C487.51 132.36 488.15 134.64 488.15 137.10C488.15 139.18 487.58 139.94 486.87 139.94C486.16 139.94 485.58 139.18 485.58 137.10C485.58 134.64 486.22 132.36 486.87 132.36z" transform="rotate(16 486.9 136.2)"/><path d="M501.73 141.06C503.02 141.06 504.30 142.57 504.30 144.21C504.30 145.60 503.14 146.11 501.73 146.11C500.31 146.11 499.15 145.60 499.15 144.21C499.15 142.57 500.44 141.06 501.73 141.06z" transform="rotate(1 501.7 143.6)"/><ellipse cx="507.7" cy="143.6" rx="1.98" ry="2.48" transform="rotate(-13 507.7 143.6)"/><path d="M517.58 124.88C518.61 124.88 519.64 128.67 519.64 132.78C519.64 136.25 518.71 137.51 517.58 137.51C516.45 137.51 515.52 136.25 515.52 132.78C515.52 128.67 516.55 124.88 517.58 124.88z" transform="rotate(2 517.6 131.2)"/><path d="M523.77 126.10C524.80 126.10 525.83 130.64 525.83 135.57C525.83 139.74 524.90 141.25 523.77 141.25C522.64 141.25 521.71 139.74 521.71 135.57C521.71 130.64 522.74 126.10 523.77 126.10z" transform="rotate(-17 523.8 133.7)"/><ellipse cx="531.9" cy="138.6" rx="2.97" ry="1.98" transform="rotate(1 531.9 138.6)"/><path d="M538.14 136.61C539.42 136.61 540.71 137.82 540.71 139.13C540.71 140.25 539.55 140.65 538.14 140.65C536.72 140.65 535.56 140.25 535.56 139.13C535.56 137.82 536.85 136.61 538.14 136.61z" transform="rotate(17 538.1 138.6)"/><path d="M546.80 125.93C548.09 125.93 549.38 127.90 549.38 130.04C549.38 131.84 548.22 132.50 546.80 132.50C545.39 132.50 544.23 131.84 544.23 130.04C544.23 127.90 545.52 125.93 546.80 125.93z" transform="rotate(13 546.8 129.2)"/><ellipse cx="556.7" cy="128.7" rx="1.49" ry="3.96" transform="rotate(7 556.7 128.7)"/><path d="M562.41 124.68C563.18 124.68 563.95 127.10 563.95 129.73C563.95 131.96 563.26 132.76 562.41 132.76C561.56 132.76 560.86 131.96 560.86 129.73C560.86 127.10 561.64 124.68 562.41 124.68z" transform="rotate(-9 562.4 128.7)"/><path d="M568.60 119.95C569.50 119.95 570.40 122.99 570.40 126.27C570.40 129.05 569.59 130.06 568.60 130.06C567.61 130.06 566.80 129.05 566.80 126.27C566.80 122.99 567.70 119.95 568.60 119.95z" transform="rotate(-5 568.6 125.0)"/><ellipse cx="577.0" cy="126.2" rx="1.73" ry="4.95" transform="rotate(-12 577.0 126.2)"/><path d="M585.20 115.00C586.10 115.00 587.00 118.03 587.00 121.32C587.00 124.09 586.19 125.11 585.20 125.11C584.20 125.11 583.39 124.09 583.39 121.32C583.39 118.03 584.29 115.00 585.20 115.00z" transform="rotate(10 585.2 120.1)"/><path d="M592.63 116.26C593.40 116.26 594.17 118.54 594.17 121.00C594.17 123.08 593.48 123.84 592.63 123.84C591.78 123.84 591.08 123.08 591.08 121.00C591.08 118.54 591.85 116.26 592.63 116.26z" transform="rotate(1 592.6 120.1)"/><ellipse cx="586.4" cy="139.9" rx="1.73" ry="6.93" transform="rotate(10 586.4 139.9)"/><path d="M595.10 132.79C596.00 132.79 596.91 137.04 596.91 141.64C596.91 145.53 596.09 146.94 595.10 146.94C594.11 146.94 593.30 145.53 593.30 141.64C593.30 137.04 594.20 132.79 595.10 132.79z" transform="rotate(-6 595.1 139.9)"/><path d="M602.53 137.29C603.82 137.29 605.11 140.32 605.11 143.61C605.11 146.39 603.95 147.40 602.53 147.40C601.12 147.40 599.96 146.39 599.96 143.61C599.96 140.32 601.24 137.29 602.53 137.29z" transform="rotate(-10 602.5 142.3)"/><ellipse cx="369.7" cy="147.3" rx="1.98" ry="3.72" transform="rotate(11 369.7 147.3)"/><path d="M378.88 138.53C379.65 138.53 380.42 141.56 380.42 144.85C380.42 147.62 379.73 148.63 378.88 148.63C378.03 148.63 377.33 147.62 377.33 144.85C377.33 141.56 378.11 138.53 378.88 138.53z" transform="rotate(17 378.9 143.6)"/><path d="M389.53 142.29C390.17 142.29 390.82 143.81 390.82 145.45C390.82 146.84 390.24 147.35 389.53 147.35C388.82 147.35 388.24 146.84 388.24 145.45C388.24 143.81 388.89 142.29 389.53 142.29z" transform="rotate(13 389.5 144.8)"/><ellipse cx="394.5" cy="147.3" rx="2.48" ry="2.97" transform="rotate(11 394.5 147.3)"/><path d="M383.83 156.42C385.12 156.42 386.41 157.63 386.41 158.95C386.41 160.06 385.25 160.46 383.83 160.46C382.42 160.46 381.26 160.06 381.26 158.95C381.26 157.63 382.54 156.42 383.83 156.42z" transform="rotate(11 383.8 158.4)"/><path d="M399.44 154.65C400.21 154.65 400.98 156.93 400.98 159.39C400.98 161.47 400.29 162.23 399.44 162.23C398.59 162.23 397.89 161.47 397.89 159.39C397.89 156.93 398.66 154.65 399.44 154.65z" transform="rotate(9 399.4 158.4)"/><ellipse cx="406.9" cy="152.3" rx="0.99" ry="2.97" transform="rotate(-10 406.9 152.3)"/><path d="M373.43 167.80C375.23 167.80 377.04 169.61 377.04 171.58C377.04 173.25 375.41 173.86 373.43 173.86C371.45 173.86 369.82 173.25 369.82 171.58C369.82 169.61 371.63 167.80 373.43 167.80z" transform="rotate(1 373.4 170.8)"/><path d="M379.62 166.79C380.91 166.79 382.20 168.92 382.20 171.22C382.20 173.16 381.04 173.87 379.62 173.87C378.21 173.87 377.05 173.16 377.05 171.22C377.05 168.92 378.33 166.79 379.62 166.79z" transform="rotate(-5 379.6 170.3)"/><ellipse cx="421.7" cy="170.8" rx="1.98" ry="4.46" transform="rotate(-17 421.7 170.8)"/><path d="M438.57 159.08C439.86 159.08 441.15 162.41 441.15 166.02C441.15 169.08 439.99 170.19 438.57 170.19C437.15 170.19 435.99 169.08 435.99 166.02C435.99 162.41 437.28 159.08 438.57 159.08z" transform="rotate(-17 438.6 164.6)"/><path d="M460.12 163.80C461.15 163.80 462.18 166.53 462.18 169.49C462.18 171.99 461.25 172.90 460.12 172.90C458.98 172.90 458.06 171.99 458.06 169.49C458.06 166.53 459.09 163.80 460.12 163.80z" transform="rotate(-8 460.1 168.3)"/><ellipse cx="468.3" cy="170.8" rx="1.73" ry="3.96" transform="rotate(-9 468.3 170.8)"/><path d="M477.46 157.08C478.23 157.08 479.00 160.87 479.00 164.98C479.00 168.45 478.31 169.71 477.46 169.71C476.61 169.71 475.91 168.45 475.91 164.98C475.91 160.87 476.68 157.08 477.46 157.08z" transform="rotate(7 477.5 163.4)"/><path d="M491.82 160.35C493.37 160.35 494.91 162.48 494.91 164.78C494.91 166.72 493.52 167.43 491.82 167.43C490.12 167.43 488.73 166.72 488.73 164.78C488.73 162.48 490.27 160.35 491.82 160.35z" transform="rotate(16 491.8 163.9)"/><ellipse cx="515.8" cy="170.3" rx="1.98" ry="4.46" transform="rotate(-2 515.8 170.3)"/><path d="M532.69 158.33C533.98 158.33 535.26 161.67 535.26 165.28C535.26 168.34 534.10 169.45 532.69 169.45C531.27 169.45 530.11 168.34 530.11 165.28C530.11 161.67 531.40 158.33 532.69 158.33z" transform="rotate(16 532.7 163.9)"/><path d="M547.55 154.65C548.19 154.65 548.84 156.93 548.84 159.39C548.84 161.47 548.26 162.23 547.55 162.23C546.84 162.23 546.26 161.47 546.26 159.39C546.26 156.93 546.90 154.65 547.55 154.65z" transform="rotate(18 547.5 158.4)"/><ellipse cx="553.7" cy="166.4" rx="2.48" ry="4.46" transform="rotate(16 553.7 166.4)"/><path d="M553.74 154.65C554.38 154.65 555.03 156.93 555.03 159.39C555.03 161.47 554.45 162.23 553.74 162.23C553.03 162.23 552.45 161.47 552.45 159.39C552.45 156.93 553.10 154.65 553.74 154.65z" transform="rotate(-5 553.7 158.4)"/><path d="M570.58 148.49C571.87 148.49 573.16 150.00 573.16 151.64C573.16 153.03 572.00 153.54 570.58 153.54C569.17 153.54 568.01 153.03 568.01 151.64C568.01 150.00 569.29 148.49 570.58 148.49z" transform="rotate(-10 570.6 151.0)"/><ellipse cx="579.7" cy="151.5" rx="2.48" ry="2.97" transform="rotate(-10 579.7 151.5)"/><path d="M595.35 168.76C596.38 168.76 597.41 171.48 597.41 174.44C597.41 176.94 596.48 177.85 595.35 177.85C594.22 177.85 593.29 176.94 593.29 174.44C593.29 171.48 594.32 168.76 595.35 168.76z" transform="rotate(-11 595.3 173.3)"/><path d="M390.77 183.14C391.41 183.14 392.06 185.41 392.06 187.87C392.06 189.96 391.48 190.72 390.77 190.72C390.06 190.72 389.48 189.96 389.48 187.87C389.48 185.41 390.12 183.14 390.77 183.14z" transform="rotate(-11 390.8 186.9)"/><ellipse cx="399.4" cy="192.6" rx="3.22" ry="3.47" transform="rotate(4 399.4 192.6)"/><path d="M382.84 196.73C383.87 196.73 384.90 199.77 384.90 203.05C384.90 205.83 383.98 206.84 382.84 206.84C381.71 206.84 380.78 205.83 380.78 203.05C380.78 199.77 381.81 196.73 382.84 196.73z" transform="rotate(14 382.8 201.8)"/><path d="M436.59 181.92C437.10 181.92 437.62 183.44 437.62 185.08C437.62 186.47 437.15 186.98 436.59 186.98C436.02 186.98 435.56 186.47 435.56 185.08C435.56 183.44 436.07 181.92 436.59 181.92z" transform="rotate(12 436.6 184.4)"/><ellipse cx="453.9" cy="188.2" rx="1.98" ry="2.97" transform="rotate(-1 453.9 188.2)"/><path d="M437.83 192.97C440.14 192.97 442.46 197.52 442.46 202.44C442.46 206.61 440.38 208.13 437.83 208.13C435.28 208.13 433.19 206.61 433.19 202.44C433.19 197.52 435.51 192.97 437.83 192.97z" transform="rotate(6 437.8 200.5)"/><path d="M429.16 197.90C430.70 197.90 432.25 203.20 432.25 208.95C432.25 213.81 430.86 215.58 429.16 215.58C427.46 215.58 426.07 213.81 426.07 208.95C426.07 203.20 427.61 197.90 429.16 197.90z" transform="rotate(11 429.2 206.7)"/><ellipse cx="460.1" cy="204.3" rx="1.98" ry="4.46" transform="rotate(-15 460.1 204.3)"/><path d="M465.07 206.92C466.36 206.92 467.65 209.04 467.65 211.34C467.65 213.28 466.49 213.99 465.07 213.99C463.65 213.99 462.50 213.28 462.50 211.34C462.50 209.04 463.78 206.92 465.07 206.92z" transform="rotate(6 465.1 210.5)"/><path d="M468.79 197.29C469.82 197.29 470.85 198.50 470.85 199.81C470.85 200.93 469.92 201.33 468.79 201.33C467.65 201.33 466.73 200.93 466.73 199.81C466.73 198.50 467.76 197.29 468.79 197.29z" transform="rotate(15 468.8 199.3)"/><ellipse cx="475.0" cy="212.9" rx="1.24" ry="4.46" transform="rotate(10 475.0 212.9)"/><path d="M477.46 191.78C478.74 191.78 480.03 194.81 480.03 198.10C480.03 200.87 478.87 201.89 477.46 201.89C476.04 201.89 474.88 200.87 474.88 198.10C474.88 194.81 476.17 191.78 477.46 191.78z" transform="rotate(9 477.5 196.8)"/><path d="M474.48 181.42C475.00 181.42 475.51 183.24 475.51 185.21C475.51 186.87 475.05 187.48 474.48 187.48C473.92 187.48 473.45 186.87 473.45 185.21C473.45 183.24 473.97 181.42 474.48 181.42z" transform="rotate(-1 474.5 184.4)"/><ellipse cx="483.6" cy="180.7" rx="0.74" ry="2.48" transform="rotate(-12 483.6 180.7)"/><path d="M492.32 188.85C492.83 188.85 493.35 190.67 493.35 192.64C493.35 194.30 492.88 194.91 492.32 194.91C491.75 194.91 491.29 194.30 491.29 192.64C491.29 190.67 491.80 188.85 492.32 188.85z" transform="rotate(10 492.3 191.9)"/><path d="M498.51 196.51C499.80 196.51 501.08 198.93 501.08 201.56C501.08 203.78 499.92 204.59 498.51 204.59C497.09 204.59 495.93 203.78 495.93 201.56C495.93 198.93 497.22 196.51 498.51 196.51z" transform="rotate(-6 498.5 200.5)"/><ellipse cx="514.6" cy="193.1" rx="0.99" ry="2.48" transform="rotate(11 514.6 193.1)"/><path d="M533.18 191.23C535.50 191.23 537.82 196.08 537.82 201.33C537.82 205.78 535.73 207.39 533.18 207.39C530.63 207.39 528.55 205.78 528.55 201.33C528.55 196.08 530.86 191.23 533.18 191.23z" transform="rotate(17 533.2 199.3)"/><path d="M523.28 196.66C524.82 196.66 526.37 201.96 526.37 207.71C526.37 212.58 524.98 214.34 523.28 214.34C521.58 214.34 520.18 212.58 520.18 207.71C520.18 201.96 521.73 196.66 523.28 196.66z" transform="rotate(-4 523.3 205.5)"/><ellipse cx="530.7" cy="182.0" rx="0.99" ry="2.48" transform="rotate(-4 530.7 182.0)"/><path d="M548.04 183.39C549.07 183.39 550.10 185.51 550.10 187.81C550.10 189.76 549.18 190.46 548.04 190.46C546.91 190.46 545.98 189.76 545.98 187.81C545.98 185.51 547.01 183.39 548.04 183.39z" transform="rotate(16 548.0 186.9)"/><path d="M562.41 196.05C563.70 196.05 564.98 197.26 564.98 198.58C564.98 199.69 563.83 200.09 562.41 200.09C560.99 200.09 559.83 199.69 559.83 198.58C559.83 197.26 561.12 196.05 562.41 196.05z" transform="rotate(8 562.4 198.1)"/><ellipse cx="558.0" cy="209.2" rx="2.48" ry="3.47" transform="rotate(-12 558.0 209.2)"/><path d="M568.60 181.92C569.12 181.92 569.63 183.44 569.63 185.08C569.63 186.47 569.17 186.98 568.60 186.98C568.03 186.98 567.57 186.47 567.57 185.08C567.57 183.44 568.09 181.92 568.60 181.92z" transform="rotate(-13 568.6 184.4)"/><path d="M585.20 188.09C585.58 188.09 585.97 190.36 585.97 192.83C585.97 194.91 585.62 195.67 585.20 195.67C584.77 195.67 584.42 194.91 584.42 192.83C584.42 190.36 584.81 188.09 585.20 188.09z" transform="rotate(-13 585.2 191.9)"/><ellipse cx="602.5" cy="206.7" rx="2.48" ry="8.67" transform="rotate(15 602.5 206.7)"/><path d="M403.15 213.84C403.92 213.84 404.70 216.27 404.70 218.90C404.70 221.12 404.00 221.93 403.15 221.93C402.30 221.93 401.61 221.12 401.61 218.90C401.61 216.27 402.38 213.84 403.15 213.84z" transform="rotate(11 403.2 217.9)"/><path d="M375.91 224.76C377.71 224.76 379.51 226.58 379.51 228.55C379.51 230.22 377.89 230.82 375.91 230.82C373.92 230.82 372.30 230.22 372.30 228.55C372.30 226.58 374.10 224.76 375.91 224.76z" transform="rotate(-13 375.9 227.8)"/><ellipse cx="371.4" cy="227.8" rx="1.49" ry="1.98" transform="rotate(12 371.4 227.8)"/><path d="M425.44 226.48C426.99 226.48 428.53 228.75 428.53 231.22C428.53 233.30 427.14 234.06 425.44 234.06C423.74 234.06 422.35 233.30 422.35 231.22C422.35 228.75 423.90 226.48 425.44 226.48z" transform="rotate(17 425.4 230.3)"/><path d="M440.30 223.02C441.59 223.02 442.88 225.14 442.88 227.44C442.88 229.38 441.72 230.09 440.30 230.09C438.89 230.09 437.73 229.38 437.73 227.44C437.73 225.14 439.02 223.02 440.30 223.02z" transform="rotate(6 440.3 226.6)"/><ellipse cx="447.2" cy="225.3" rx="1.98" ry="3.47" transform="rotate(-5 447.2 225.3)"/><path d="M477.46 225.22C479.26 225.22 481.06 228.25 481.06 231.53C481.06 234.31 479.44 235.32 477.46 235.32C475.47 235.32 473.85 234.31 473.85 231.53C473.85 228.25 475.65 225.22 477.46 225.22z" transform="rotate(2 477.5 230.3)"/><path d="M483.65 230.22C484.93 230.22 486.22 231.74 486.22 233.38C486.22 234.77 485.06 235.27 483.65 235.27C482.23 235.27 481.07 234.77 481.07 233.38C481.07 231.74 482.36 230.22 483.65 230.22z" transform="rotate(-13 483.6 232.7)"/><ellipse cx="492.8" cy="220.9" rx="1.98" ry="3.47" transform="rotate(-17 492.8 220.9)"/><path d="M517.08 222.01C518.11 222.01 519.14 224.74 519.14 227.69C519.14 230.19 518.22 231.10 517.08 231.10C515.95 231.10 515.02 230.19 515.02 227.69C515.02 224.74 516.05 222.01 517.08 222.01z" transform="rotate(-25 517.1 226.6)"/><path d="M534.42 221.78C535.71 221.78 537.00 223.90 537.00 226.20C537.00 228.15 535.84 228.85 534.42 228.85C533.00 228.85 531.85 228.15 531.85 226.20C531.85 223.90 533.13 221.78 534.42 221.78z" transform="rotate(17 534.4 225.3)"/><ellipse cx="543.8" cy="225.3" rx="0.99" ry="2.97" transform="rotate(5 543.8 225.3)"/><path d="M512.13 215.36C512.65 215.36 513.16 216.87 513.16 218.52C513.16 219.91 512.70 220.41 512.13 220.41C511.56 220.41 511.10 219.91 511.10 218.52C511.10 216.87 511.61 215.36 512.13 215.36z" transform="rotate(1 512.1 217.9)"/><path d="M577.76 228.48C579.31 228.48 580.86 230.30 580.86 232.27C580.86 233.93 579.46 234.54 577.76 234.54C576.06 234.54 574.67 233.93 574.67 232.27C574.67 230.30 576.22 228.48 577.76 228.48z" transform="rotate(16 577.8 231.5)"/><ellipse cx="596.3" cy="230.3" rx="1.49" ry="3.72" transform="rotate(-2 596.3 230.3)"/><path d="M490.33 210.41C490.72 210.41 491.11 211.92 491.11 213.56C491.11 214.95 490.76 215.46 490.33 215.46C489.91 215.46 489.56 214.95 489.56 213.56C489.56 211.92 489.95 210.41 490.33 210.41z" transform="rotate(13 490.3 212.9)"/><path d="M583.96 209.17C584.34 209.17 584.73 210.68 584.73 212.33C584.73 213.71 584.38 214.22 583.96 214.22C583.53 214.22 583.18 213.71 583.18 212.33C583.18 210.68 583.57 209.17 583.96 209.17z" transform="rotate(12 584.0 211.7)"/><ellipse cx="129.7" cy="243.9" rx="1.49" ry="7.43" transform="rotate(-10 129.7 243.9)"/><path d="M146.31 236.40C147.34 236.40 148.37 238.68 148.37 241.14C148.37 243.22 147.44 243.98 146.31 243.98C145.18 243.98 144.25 243.22 144.25 241.14C144.25 238.68 145.28 236.40 146.31 236.40z" transform="rotate(-9 146.3 240.2)"/><path d="M169.34 235.11C170.37 235.11 171.40 238.90 171.40 243.01C171.40 246.48 170.48 247.75 169.34 247.75C168.21 247.75 167.28 246.48 167.28 243.01C167.28 238.90 168.31 235.11 169.34 235.11z" transform="rotate(-7 169.3 241.4)"/><ellipse cx="142.8" cy="251.3" rx="2.48" ry="1.98" transform="rotate(-9 142.8 251.3)"/><path d="M154.48 253.76C155.77 253.76 157.06 255.28 157.06 256.92C157.06 258.31 155.90 258.82 154.48 258.82C153.07 258.82 151.91 258.31 151.91 256.92C151.91 255.28 153.20 253.76 154.48 253.76z" transform="rotate(3 154.5 256.3)"/><path d="M155.72 261.12C157.27 261.12 158.81 264.91 158.81 269.02C158.81 272.49 157.42 273.75 155.72 273.75C154.02 273.75 152.63 272.49 152.63 269.02C152.63 264.91 154.18 261.12 155.72 261.12z" transform="rotate(-9 155.7 267.4)"/><ellipse cx="184.2" cy="252.6" rx="2.48" ry="2.48" transform="rotate(-3 184.2 252.6)"/><path d="M199.07 241.23C201.00 241.23 202.93 247.30 202.93 253.86C202.93 259.42 201.19 261.44 199.07 261.44C196.94 261.44 195.20 259.42 195.20 253.86C195.20 247.30 197.13 241.23 199.07 241.23z" transform="rotate(-13 199.1 251.3)"/><path d="M208.97 237.06C211.55 237.06 214.12 241.91 214.12 247.17C214.12 251.61 211.81 253.23 208.97 253.23C206.14 253.23 203.82 251.61 203.82 247.17C203.82 241.91 206.40 237.06 208.97 237.06z" transform="rotate(15 209.0 245.1)"/><ellipse cx="237.5" cy="243.4" rx="2.48" ry="1.98" transform="rotate(-5 237.5 243.4)"/><path d="M233.00 251.52C234.28 251.52 235.57 253.64 235.57 255.94C235.57 257.88 234.41 258.59 233.00 258.59C231.58 258.59 230.42 257.88 230.42 255.94C230.42 253.64 231.71 251.52 233.00 251.52z" transform="rotate(-2 233.0 255.1)"/><path d="M223.83 255.51C224.22 255.51 224.61 256.72 224.61 258.03C224.61 259.15 224.26 259.55 223.83 259.55C223.41 259.55 223.06 259.15 223.06 258.03C223.06 256.72 223.45 255.51 223.83 255.51z" transform="rotate(3 223.8 257.5)"/><ellipse cx="259.7" cy="240.2" rx="2.48" ry="6.19" transform="rotate(15 259.7 240.2)"/><path d="M277.08 238.40C278.11 238.40 279.14 240.22 279.14 242.19C279.14 243.86 278.22 244.46 277.08 244.46C275.95 244.46 275.02 243.86 275.02 242.19C275.02 240.22 276.05 238.40 277.08 238.40z" transform="rotate(-3 277.1 241.4)"/><path d="M272.13 246.28C273.16 246.28 274.19 249.32 274.19 252.60C274.19 255.38 273.26 256.39 272.13 256.39C271.00 256.39 270.07 255.38 270.07 252.60C270.07 249.32 271.10 246.28 272.13 246.28z" transform="rotate(15 272.1 251.3)"/><ellipse cx="278.3" cy="253.8" rx="1.98" ry="8.67" transform="rotate(0 278.3 253.8)"/><path d="M288.23 240.07C289.52 240.07 290.80 243.86 290.80 247.96C290.80 251.44 289.65 252.70 288.23 252.70C286.81 252.70 285.65 251.44 285.65 247.96C285.65 243.86 286.94 240.07 288.23 240.07z" transform="rotate(1 288.2 246.4)"/><path d="M298.14 232.66C299.17 232.66 300.20 235.69 300.20 238.98C300.20 241.76 299.27 242.77 298.14 242.77C297.00 242.77 296.08 241.76 296.08 238.98C296.08 235.69 297.11 232.66 298.14 232.66z" transform="rotate(1 298.1 237.7)"/><ellipse cx="310.5" cy="248.9" rx="2.48" ry="4.46" transform="rotate(-17 310.5 248.9)"/><path d="M317.95 243.81C318.72 243.81 319.50 246.84 319.50 250.12C319.50 252.90 318.80 253.91 317.95 253.91C317.10 253.91 316.40 252.90 316.40 250.12C316.40 246.84 317.18 243.81 317.95 243.81z" transform="rotate(-2 318.0 248.9)"/><path d="M326.62 238.76C328.16 238.76 329.71 244.82 329.71 251.39C329.71 256.94 328.32 258.97 326.62 258.97C324.92 258.97 323.53 256.94 323.53 251.39C323.53 244.82 325.07 238.76 326.62 238.76z" transform="rotate(-11 326.6 248.9)"/><ellipse cx="335.3" cy="242.7" rx="6.19" ry="7.93" transform="rotate(-18 335.3 242.7)"/><path d="M360.80 249.54C362.09 249.54 363.37 251.36 363.37 253.33C363.37 255.00 362.22 255.61 360.80 255.61C359.38 255.61 358.22 255.00 358.22 253.33C358.22 251.36 359.51 249.54 360.80 249.54z" transform="rotate(11 360.8 252.6)"/><path d="M351.39 253.03C351.77 253.03 352.16 254.24 352.16 255.56C352.16 256.67 351.81 257.07 351.39 257.07C350.96 257.07 350.61 256.67 350.61 255.56C350.61 254.24 351.00 253.03 351.39 253.03z" transform="rotate(-12 351.4 255.1)"/><ellipse cx="363.8" cy="239.0" rx="0.99" ry="3.72" transform="rotate(-1 363.8 239.0)"/><path d="M128.97 267.61C130.78 267.61 132.58 269.74 132.58 272.04C132.58 273.98 130.96 274.69 128.97 274.69C126.99 274.69 125.37 273.98 125.37 272.04C125.37 269.74 127.17 267.61 128.97 267.61z" transform="rotate(8 129.0 271.2)"/><path d="M138.38 270.60C139.67 270.60 140.96 272.42 140.96 274.39C140.96 276.05 139.80 276.66 138.38 276.66C136.97 276.66 135.81 276.05 135.81 274.39C135.81 272.42 137.10 270.60 138.38 270.60z" transform="rotate(2 138.4 273.6)"/><ellipse cx="176.8" cy="270.7" rx="2.48" ry="3.72" transform="rotate(-6 176.8 270.7)"/><path d="M194.11 267.34C195.40 267.34 196.69 270.37 196.69 273.65C196.69 276.43 195.53 277.44 194.11 277.44C192.69 277.44 191.54 276.43 191.54 273.65C191.54 270.37 192.82 267.34 194.11 267.34z" transform="rotate(-20 194.1 272.4)"/><path d="M199.81 267.36C200.58 267.36 201.35 269.64 201.35 272.10C201.35 274.18 200.66 274.94 199.81 274.94C198.96 274.94 198.26 274.18 198.26 272.10C198.26 269.64 199.04 267.36 199.81 267.36z" transform="rotate(1 199.8 271.2)"/><ellipse cx="209.0" cy="271.2" rx="1.98" ry="2.97" transform="rotate(2 209.0 271.2)"/><path d="M218.88 267.39C219.39 267.39 219.91 268.90 219.91 270.54C219.91 271.93 219.45 272.44 218.88 272.44C218.31 272.44 217.85 271.93 217.85 270.54C217.85 268.90 218.36 267.39 218.88 267.39z" transform="rotate(10 218.9 269.9)"/><path d="M260.98 258.95C262.53 258.95 264.08 261.07 264.08 263.37C264.08 265.31 262.68 266.02 260.98 266.02C259.28 266.02 257.89 265.31 257.89 263.37C257.89 261.07 259.44 258.95 260.98 258.95z" transform="rotate(-14 261.0 262.5)"/><ellipse cx="263.5" cy="268.7" rx="2.48" ry="2.97" transform="rotate(2 263.5 268.7)"/><path d="M252.81 273.55C254.61 273.55 256.42 275.83 256.42 278.29C256.42 280.38 254.79 281.13 252.81 281.13C250.83 281.13 249.20 280.38 249.20 278.29C249.20 275.83 251.01 273.55 252.81 273.55z" transform="rotate(-9 252.8 277.3)"/><path d="M290.71 255.74C292.25 255.74 293.80 257.56 293.80 259.53C293.80 261.19 292.41 261.80 290.71 261.80C289.01 261.80 287.61 261.19 287.61 259.53C287.61 257.56 289.16 255.74 290.71 255.74z" transform="rotate(-8 290.7 258.8)"/><ellipse cx="294.4" cy="265.0" rx="2.48" ry="2.97" transform="rotate(10 294.4 265.0)"/><path d="M304.33 264.89C305.36 264.89 306.39 267.16 306.39 269.62C306.39 271.71 305.46 272.46 304.33 272.46C303.19 272.46 302.27 271.71 302.27 269.62C302.27 267.16 303.30 264.89 304.33 264.89z" transform="rotate(0 304.3 268.7)"/><path d="M308.04 273.50C308.82 273.50 309.59 277.29 309.59 281.40C309.59 284.87 308.89 286.14 308.04 286.14C307.19 286.14 306.50 284.87 306.50 281.40C306.50 277.29 307.27 273.50 308.04 273.50z" transform="rotate(2 308.0 279.8)"/><ellipse cx="319.2" cy="271.2" rx="1.98" ry="6.19" transform="rotate(-25 319.2 271.2)"/><path d="M317.95 277.80C318.98 277.80 320.01 279.01 320.01 280.33C320.01 281.44 319.08 281.84 317.95 281.84C316.82 281.84 315.89 281.44 315.89 280.33C315.89 279.01 316.92 277.80 317.95 277.80z" transform="rotate(9 318.0 279.8)"/><path d="M337.02 265.14C338.31 265.14 339.60 267.26 339.60 269.56C339.60 271.50 338.44 272.21 337.02 272.21C335.60 272.21 334.45 271.50 334.45 269.56C334.45 267.26 335.73 265.14 337.02 265.14z" transform="rotate(15 337.0 268.7)"/><ellipse cx="347.2" cy="267.4" rx="0.74" ry="2.48" transform="rotate(-2 347.2 267.4)"/><path d="M288.23 272.97C291.06 272.97 293.90 277.83 293.90 283.08C293.90 287.53 291.35 289.14 288.23 289.14C285.11 289.14 282.56 287.53 282.56 283.08C282.56 277.83 285.40 272.97 288.23 272.97z" transform="rotate(4 288.2 281.1)"/><path d="M278.32 277.15C280.25 277.15 282.19 283.21 282.19 289.78C282.19 295.33 280.45 297.36 278.32 297.36C276.20 297.36 274.46 295.33 274.46 289.78C274.46 283.21 276.39 277.15 278.32 277.15z" transform="rotate(0 278.3 287.3)"/><ellipse cx="152.7" cy="284.8" rx="1.24" ry="2.48" transform="rotate(0 152.7 284.8)"/><path d="M170.58 285.94C171.61 285.94 172.64 288.21 172.64 290.67C172.64 292.76 171.72 293.52 170.58 293.52C169.45 293.52 168.52 292.76 168.52 290.67C168.52 288.21 169.55 285.94 170.58 285.94z" transform="rotate(7 170.6 289.7)"/><path d="M132.93 292.13C133.84 292.13 134.74 294.40 134.74 296.87C134.74 298.95 133.93 299.71 132.93 299.71C131.94 299.71 131.13 298.95 131.13 296.87C131.13 294.40 132.03 292.13 132.93 292.13z" transform="rotate(-2 132.9 295.9)"/><ellipse cx="155.2" cy="302.1" rx="4.95" ry="7.93" transform="rotate(1 155.2 302.1)"/><path d="M145.81 298.20C147.62 298.20 149.42 304.26 149.42 310.83C149.42 316.39 147.80 318.41 145.81 318.41C143.83 318.41 142.21 316.39 142.21 310.83C142.21 304.26 144.01 298.20 145.81 298.20z" transform="rotate(-1 145.8 308.3)"/><path d="M184.95 298.85C186.24 298.85 187.52 300.06 187.52 301.38C187.52 302.49 186.36 302.89 184.95 302.89C183.53 302.89 182.37 302.49 182.37 301.38C182.37 300.06 183.66 298.85 184.95 298.85z" transform="rotate(16 184.9 300.9)"/><ellipse cx="190.4" cy="287.3" rx="0.99" ry="2.48" transform="rotate(7 190.4 287.3)"/><path d="M199.07 285.91C200.10 285.91 201.13 288.94 201.13 292.23C201.13 295.01 200.20 296.02 199.07 296.02C197.93 296.02 197.00 295.01 197.00 292.23C197.00 288.94 198.03 285.91 199.07 285.91z" transform="rotate(14 199.1 291.0)"/><path d="M215.16 280.96C216.45 280.96 217.74 283.99 217.74 287.28C217.74 290.05 216.58 291.07 215.16 291.07C213.75 291.07 212.59 290.05 212.59 287.28C212.59 283.99 213.88 280.96 215.16 280.96z" transform="rotate(16 215.2 286.0)"/><ellipse cx="207.7" cy="294.7" rx="0.99" ry="2.48" transform="rotate(-9 207.7 294.7)"/><path d="M236.96 280.96C237.99 280.96 239.02 283.99 239.02 287.28C239.02 290.05 238.09 291.07 236.96 291.07C235.83 291.07 234.90 290.05 234.90 287.28C234.90 283.99 235.93 280.96 236.96 280.96z" transform="rotate(2 237.0 286.0)"/><path d="M217.15 299.49C218.18 299.49 219.21 304.03 219.21 308.96C219.21 313.13 218.28 314.64 217.15 314.64C216.01 314.64 215.08 313.13 215.08 308.96C215.08 304.03 216.12 299.49 217.15 299.49z" transform="rotate(16 217.1 307.1)"/><ellipse cx="232.5" cy="313.8" rx="2.97" ry="2.48" transform="rotate(12 232.5 313.8)"/><path d="M257.27 298.32C257.91 298.32 258.56 300.60 258.56 303.06C258.56 305.14 257.98 305.90 257.27 305.90C256.56 305.90 255.98 305.14 255.98 303.06C255.98 300.60 256.63 298.32 257.27 298.32z" transform="rotate(-13 257.3 302.1)"/><path d="M313.74 287.43C315.03 287.43 316.32 289.55 316.32 291.85C316.32 293.80 315.16 294.50 313.74 294.50C312.32 294.50 311.16 293.80 311.16 291.85C311.16 289.55 312.45 287.43 313.74 287.43z" transform="rotate(-14 313.7 291.0)"/><ellipse cx="327.9" cy="289.7" rx="1.98" ry="4.95" transform="rotate(-2 327.9 289.7)"/><path d="M343.96 279.22C344.99 279.22 346.02 282.55 346.02 286.16C346.02 289.22 345.09 290.33 343.96 290.33C342.82 290.33 341.90 289.22 341.90 286.16C341.90 282.55 342.93 279.22 343.96 279.22z" transform="rotate(-15 344.0 284.8)"/><path d="M364.27 279.72C365.30 279.72 366.33 282.75 366.33 286.04C366.33 288.82 365.40 289.83 364.27 289.83C363.13 289.83 362.21 288.82 362.21 286.04C362.21 282.75 363.24 279.72 364.27 279.72z" transform="rotate(-9 364.3 284.8)"/><ellipse cx="345.2" cy="304.6" rx="1.98" ry="7.43" transform="rotate(-15 345.2 304.6)"/><path d="M305.57 291.42C305.95 291.42 306.34 292.63 306.34 293.95C306.34 295.06 305.99 295.46 305.57 295.46C305.14 295.46 304.79 295.06 304.79 293.95C304.79 292.63 305.18 291.42 305.57 291.42z" transform="rotate(6 305.6 293.4)"/><path d="M289.47 304.03C290.76 304.03 292.04 305.85 292.04 307.82C292.04 309.49 290.88 310.10 289.47 310.10C288.05 310.10 286.89 309.49 286.89 307.82C286.89 305.85 288.18 304.03 289.47 304.03z" transform="rotate(10 289.5 307.1)"/><ellipse cx="299.4" cy="307.1" rx="0.99" ry="2.48" transform="rotate(14 299.4 307.1)"/><path d="M273.37 304.46C274.40 304.46 275.43 308.25 275.43 312.36C275.43 315.83 274.50 317.10 273.37 317.10C272.24 317.10 271.31 315.83 271.31 312.36C271.31 308.25 272.34 304.46 273.37 304.46z" transform="rotate(-30 273.4 310.8)"/><path d="M332.81 310.22C334.87 310.22 336.93 312.34 336.93 314.64C336.93 316.58 335.08 317.29 332.81 317.29C330.54 317.29 328.69 316.58 328.69 314.64C328.69 312.34 330.75 310.22 332.81 310.22z" transform="rotate(-12 332.8 313.8)"/><ellipse cx="360.1" cy="311.3" rx="2.97" ry="2.48" transform="rotate(8 360.1 311.3)"/><path d="M180.49 309.22C181.78 309.22 183.07 311.35 183.07 313.65C183.07 315.59 181.91 316.30 180.49 316.30C179.07 316.30 177.91 315.59 177.91 313.65C177.91 311.35 179.20 309.22 180.49 309.22z" transform="rotate(6 180.5 312.8)"/><path d="M171.82 312.98C172.21 312.98 172.59 313.89 172.59 314.87C172.59 315.71 172.25 316.01 171.82 316.01C171.40 316.01 171.05 315.71 171.05 314.87C171.05 313.89 171.43 312.98 171.82 312.98z" transform="rotate(-13 171.8 314.5)"/><ellipse cx="201.5" cy="318.2" rx="2.48" ry="2.48" transform="rotate(14 201.5 318.2)"/><path d="M139.62 321.80C140.40 321.80 141.17 325.59 141.17 329.70C141.17 333.17 140.47 334.43 139.62 334.43C138.77 334.43 138.08 333.17 138.08 329.70C138.08 325.59 138.85 321.80 139.62 321.80z" transform="rotate(-30 139.6 328.1)"/><path d="M137.15 316.90C137.53 316.90 137.92 319.17 137.92 321.63C137.92 323.72 137.57 324.48 137.15 324.48C136.72 324.48 136.37 323.72 136.37 321.63C136.37 319.17 136.76 316.90 137.15 316.90z" transform="rotate(17 137.1 320.7)"/><ellipse cx="157.0" cy="328.1" rx="1.98" ry="2.97" transform="rotate(-10 157.0 328.1)"/><path d="M166.87 324.35C167.25 324.35 167.64 325.87 167.64 327.51C167.64 328.90 167.29 329.41 166.87 329.41C166.44 329.41 166.09 328.90 166.09 327.51C166.09 325.87 166.48 324.35 166.87 324.35z" transform="rotate(16 166.9 326.9)"/><path d="M279.56 321.83C280.59 321.83 281.62 324.86 281.62 328.14C281.62 330.92 280.69 331.93 279.56 331.93C278.43 331.93 277.50 330.92 277.50 328.14C277.50 324.86 278.53 321.83 279.56 321.83z" transform="rotate(-4 279.6 326.9)"/><ellipse cx="296.9" cy="321.9" rx="1.98" ry="5.45" transform="rotate(-0 296.9 321.9)"/><path d="M317.95 318.11C318.98 318.11 320.01 321.14 320.01 324.43C320.01 327.21 319.08 328.22 317.95 328.22C316.82 328.22 315.89 327.21 315.89 324.43C315.89 321.14 316.92 318.11 317.95 318.11z" transform="rotate(18 318.0 323.2)"/><path d="M200.30 331.52C201.85 331.52 203.39 333.64 203.39 335.94C203.39 337.88 202.00 338.59 200.30 338.59C198.60 338.59 197.21 337.88 197.21 335.94C197.21 333.64 198.76 331.52 200.30 331.52z" transform="rotate(12 200.3 335.1)"/><ellipse cx="246.9" cy="333.1" rx="1.24" ry="3.72" transform="rotate(-12 246.9 333.1)"/><path d="M135.91 336.74C136.29 336.74 136.68 338.25 136.68 339.89C136.68 341.28 136.33 341.79 135.91 341.79C135.48 341.79 135.13 341.28 135.13 339.89C135.13 338.25 135.52 336.74 135.91 336.74z" transform="rotate(-2 135.9 339.3)"/><path d="M147.05 344.62C148.08 344.62 149.11 347.35 149.11 350.31C149.11 352.81 148.19 353.72 147.05 353.72C145.92 353.72 144.99 352.81 144.99 350.31C144.99 347.35 146.02 344.62 147.05 344.62z" transform="rotate(1 147.1 349.2)"/><ellipse cx="163.2" cy="343.0" rx="1.98" ry="4.95" transform="rotate(-6 163.2 343.0)"/><path d="M184.95 339.16C185.98 339.16 187.01 342.20 187.01 345.48C187.01 348.26 186.08 349.27 184.95 349.27C183.81 349.27 182.89 348.26 182.89 345.48C182.89 342.20 183.92 339.16 184.95 339.16z" transform="rotate(-11 184.9 344.2)"/><path d="M298.14 335.40C299.17 335.40 300.20 339.95 300.20 344.87C300.20 349.04 299.27 350.56 298.14 350.56C297.00 350.56 296.08 349.04 296.08 344.87C296.08 339.95 297.11 335.40 298.14 335.40z" transform="rotate(-7 298.1 343.0)"/><ellipse cx="337.8" cy="339.3" rx="1.49" ry="3.72" transform="rotate(8 337.8 339.3)"/><path d="M313.00 347.39C314.54 347.39 316.09 348.90 316.09 350.54C316.09 351.93 314.70 352.44 313.00 352.44C311.30 352.44 309.91 351.93 309.91 350.54C309.91 348.90 311.45 347.39 313.00 347.39z" transform="rotate(-17 313.0 349.9)"/><path d="M282.04 351.09C283.33 351.09 284.61 352.91 284.61 354.88C284.61 356.55 283.45 357.16 282.04 357.16C280.62 357.16 279.46 356.55 279.46 354.88C279.46 352.91 280.75 351.09 282.04 351.09z" transform="rotate(2 282.0 354.1)"/><ellipse cx="129.7" cy="360.3" rx="2.97" ry="3.47" transform="rotate(-2 129.7 360.3)"/><path d="M165.13 356.00C166.16 356.00 167.19 359.33 167.19 362.94C167.19 366.00 166.27 367.11 165.13 367.11C164.00 367.11 163.07 366.00 163.07 362.94C163.07 359.33 164.10 356.00 165.13 356.00z" transform="rotate(-17 165.1 361.6)"/><path d="M204.76 355.77C205.53 355.77 206.31 358.50 206.31 361.45C206.31 363.95 205.61 364.86 204.76 364.86C203.91 364.86 203.22 363.95 203.22 361.45C203.22 358.50 203.99 355.77 204.76 355.77z" transform="rotate(-6 204.8 360.3)"/><ellipse cx="327.1" cy="366.5" rx="0.99" ry="1.98" transform="rotate(4 327.1 366.5)"/><path d="M392.75 243.07C393.52 243.07 394.29 245.80 394.29 248.76C394.29 251.26 393.60 252.17 392.75 252.17C391.90 252.17 391.20 251.26 391.20 248.76C391.20 245.80 391.98 243.07 392.75 243.07z" transform="rotate(0 392.7 247.6)"/><path d="M424.20 233.22C425.75 233.22 427.30 234.43 427.30 235.74C427.30 236.86 425.90 237.26 424.20 237.26C422.50 237.26 421.11 236.86 421.11 235.74C421.11 234.43 422.66 233.22 424.20 233.22z" transform="rotate(-16 424.2 235.2)"/><ellipse cx="430.4" cy="246.4" rx="1.98" ry="5.45" transform="rotate(17 430.4 246.4)"/><path d="M438.32 238.40C438.71 238.40 439.09 240.22 439.09 242.19C439.09 243.86 438.75 244.46 438.32 244.46C437.90 244.46 437.55 243.86 437.55 242.19C437.55 240.22 437.94 238.40 438.32 238.40z" transform="rotate(10 438.3 241.4)"/><path d="M447.24 235.87C448.27 235.87 449.30 239.21 449.30 242.82C449.30 245.88 448.37 246.99 447.24 246.99C446.11 246.99 445.18 245.88 445.18 242.82C445.18 239.21 446.21 235.87 447.24 235.87z" transform="rotate(17 447.2 241.4)"/><ellipse cx="467.5" cy="241.4" rx="3.47" ry="8.67" transform="rotate(-14 467.5 241.4)"/><path d="M478.69 231.92C481.91 231.92 485.13 234.95 485.13 238.24C485.13 241.01 482.24 242.02 478.69 242.02C475.15 242.02 472.25 241.01 472.25 238.24C472.25 234.95 475.47 231.92 478.69 231.92z" transform="rotate(-8 478.7 237.0)"/><path d="M493.55 243.63C493.94 243.63 494.33 244.54 494.33 245.52C494.33 246.36 493.98 246.66 493.55 246.66C493.13 246.66 492.78 246.36 492.78 245.52C492.78 244.54 493.17 243.63 493.55 243.63z" transform="rotate(-17 493.6 245.1)"/><ellipse cx="502.7" cy="243.9" rx="2.48" ry="3.47" transform="rotate(10 502.7 243.9)"/><path d="M514.61 241.89C514.99 241.89 515.38 243.10 515.38 244.41C515.38 245.52 515.03 245.93 514.61 245.93C514.18 245.93 513.83 245.52 513.83 244.41C513.83 243.10 514.22 241.89 514.61 241.89z" transform="rotate(-8 514.6 243.9)"/><path d="M524.02 240.09C525.05 240.09 526.08 243.12 526.08 246.41C526.08 249.19 525.15 250.20 524.02 250.20C522.89 250.20 521.96 249.19 521.96 246.41C521.96 243.12 522.99 240.09 524.02 240.09z" transform="rotate(-13 524.0 245.1)"/><ellipse cx="529.0" cy="245.1" rx="0.74" ry="2.48" transform="rotate(-3 529.0 245.1)"/><path d="M540.61 235.07C542.16 235.07 543.70 240.37 543.70 246.12C543.70 250.98 542.31 252.75 540.61 252.75C538.91 252.75 537.52 250.98 537.52 246.12C537.52 240.37 539.07 235.07 540.61 235.07z" transform="rotate(15 540.6 243.9)"/><path d="M561.17 237.14C562.72 237.14 564.26 239.71 564.26 242.50C564.26 244.87 562.87 245.73 561.17 245.73C559.47 245.73 558.08 244.87 558.08 242.50C558.08 239.71 559.62 237.14 561.17 237.14z" transform="rotate(11 561.2 241.4)"/><ellipse cx="579.0" cy="235.2" rx="2.97" ry="1.49" transform="rotate(-9 579.0 235.2)"/><path d="M600.06 233.45C600.70 233.45 601.34 235.26 601.34 237.23C601.34 238.90 600.76 239.51 600.06 239.51C599.35 239.51 598.77 238.90 598.77 237.23C598.77 235.26 599.41 233.45 600.06 233.45z" transform="rotate(-13 600.1 236.5)"/><path d="M604.27 245.05C605.30 245.05 606.33 248.08 606.33 251.36C606.33 254.14 605.40 255.15 604.27 255.15C603.13 255.15 602.21 254.14 602.21 251.36C602.21 248.08 603.24 245.05 604.27 245.05z" transform="rotate(15 604.3 250.1)"/><ellipse cx="372.9" cy="252.6" rx="0.74" ry="1.98" transform="rotate(3 372.9 252.6)"/><path d="M414.30 261.65C415.33 261.65 416.36 264.38 416.36 267.33C416.36 269.84 415.43 270.75 414.30 270.75C413.16 270.75 412.24 269.84 412.24 267.33C412.24 264.38 413.27 261.65 414.30 261.65z" transform="rotate(7 414.3 266.2)"/><path d="M431.63 254.95C432.92 254.95 434.21 257.99 434.21 261.27C434.21 264.05 433.05 265.06 431.63 265.06C430.22 265.06 429.06 264.05 429.06 261.27C429.06 257.99 430.35 254.95 431.63 254.95z" transform="rotate(-15 431.6 260.0)"/><ellipse cx="450.2" cy="261.2" rx="3.72" ry="6.19" transform="rotate(-16 450.2 261.2)"/><path d="M462.59 259.91C463.88 259.91 465.17 262.94 465.17 266.22C465.17 269.00 464.01 270.01 462.59 270.01C461.18 270.01 460.02 269.00 460.02 266.22C460.02 262.94 461.31 259.91 462.59 259.91z" transform="rotate(-30 462.6 265.0)"/><path d="M478.69 255.74C479.98 255.74 481.27 257.56 481.27 259.53C481.27 261.19 480.11 261.80 478.69 261.80C477.28 261.80 476.12 261.19 476.12 259.53C476.12 257.56 477.41 255.74 478.69 255.74z" transform="rotate(7 478.7 258.8)"/><ellipse cx="488.6" cy="257.5" rx="1.24" ry="3.72" transform="rotate(-3 488.6 257.5)"/><path d="M380.86 272.07C382.53 272.07 384.21 274.20 384.21 276.49C384.21 278.44 382.70 279.15 380.86 279.15C379.02 279.15 377.51 278.44 377.51 276.49C377.51 274.20 379.19 272.07 380.86 272.07z" transform="rotate(-15 380.9 275.6)"/><path d="M432.38 269.81C433.41 269.81 434.44 272.85 434.44 276.13C434.44 278.91 433.51 279.92 432.38 279.92C431.24 279.92 430.32 278.91 430.32 276.13C430.32 272.85 431.35 269.81 432.38 269.81z" transform="rotate(16 432.4 274.9)"/><ellipse cx="447.2" cy="282.3" rx="1.98" ry="3.72" transform="rotate(5 447.2 282.3)"/><path d="M468.79 274.77C470.07 274.77 471.36 277.80 471.36 281.08C471.36 283.86 470.20 284.87 468.79 284.87C467.37 284.87 466.21 283.86 466.21 281.08C466.21 277.80 467.50 274.77 468.79 274.77z" transform="rotate(11 468.8 279.8)"/><path d="M485.38 269.31C486.41 269.31 487.44 272.64 487.44 276.26C487.44 279.31 486.51 280.42 485.38 280.42C484.25 280.42 483.32 279.31 483.32 276.26C483.32 272.64 484.35 269.31 485.38 269.31z" transform="rotate(-15 485.4 274.9)"/><ellipse cx="506.7" cy="276.1" rx="1.98" ry="4.95" transform="rotate(13 506.7 276.1)"/><path d="M522.04 262.66C523.58 262.66 525.13 264.78 525.13 267.08C525.13 269.03 523.74 269.73 522.04 269.73C520.34 269.73 518.95 269.03 518.95 267.08C518.95 264.78 520.49 262.66 522.04 262.66z" transform="rotate(-16 522.0 266.2)"/><path d="M526.99 269.86C528.28 269.86 529.57 271.38 529.57 273.02C529.57 274.41 528.41 274.92 526.99 274.92C525.57 274.92 524.41 274.41 524.41 273.02C524.41 271.38 525.70 269.86 526.99 269.86z" transform="rotate(13 527.0 272.4)"/><ellipse cx="530.2" cy="282.3" rx="1.98" ry="4.46" transform="rotate(-2 530.2 282.3)"/><path d="M542.35 254.93C542.99 254.93 543.63 258.72 543.63 262.82C543.63 266.30 543.06 267.56 542.35 267.56C541.64 267.56 541.06 266.30 541.06 262.82C541.06 258.72 541.70 254.93 542.35 254.93z" transform="rotate(-6 542.3 261.2)"/><path d="M546.80 270.55C548.09 270.55 549.38 273.88 549.38 277.49C549.38 280.55 548.22 281.66 546.80 281.66C545.39 281.66 544.23 280.55 544.23 277.49C544.23 273.88 545.52 270.55 546.80 270.55z" transform="rotate(2 546.8 276.1)"/><ellipse cx="556.7" cy="268.2" rx="2.48" ry="2.48" transform="rotate(15 556.7 268.2)"/><path d="M567.86 274.03C569.40 274.03 570.95 276.76 570.95 279.72C570.95 282.22 569.56 283.13 567.86 283.13C566.16 283.13 564.77 282.22 564.77 279.72C564.77 276.76 566.31 274.03 567.86 274.03z" transform="rotate(-8 567.9 278.6)"/><path d="M571.57 283.46C572.35 283.46 573.12 285.73 573.12 288.20C573.12 290.28 572.42 291.04 571.57 291.04C570.72 291.04 570.03 290.28 570.03 288.20C570.03 285.73 570.80 283.46 571.57 283.46z" transform="rotate(-13 571.6 287.3)"/><ellipse cx="582.0" cy="257.5" rx="1.49" ry="3.72" transform="rotate(1 582.0 257.5)"/><path d="M584.45 268.63C584.84 268.63 585.22 270.14 585.22 271.78C585.22 273.17 584.88 273.68 584.45 273.68C584.03 273.68 583.68 273.17 583.68 271.78C583.68 270.14 584.07 268.63 584.45 268.63z" transform="rotate(-9 584.5 271.2)"/><path d="M604.27 272.32C605.30 272.32 606.33 274.59 606.33 277.05C606.33 279.14 605.40 279.89 604.27 279.89C603.13 279.89 602.21 279.14 602.21 277.05C602.21 274.59 603.24 272.32 604.27 272.32z" transform="rotate(-14 604.3 276.1)"/><ellipse cx="367.2" cy="286.0" rx="0.74" ry="2.48" transform="rotate(-12 367.2 286.0)"/><path d="M385.32 296.59C386.09 296.59 386.86 298.86 386.86 301.33C386.86 303.41 386.17 304.17 385.32 304.17C384.47 304.17 383.77 303.41 383.77 301.33C383.77 298.86 384.55 296.59 385.32 296.59z" transform="rotate(-16 385.3 300.4)"/><path d="M431.14 288.34C433.07 288.34 435.00 292.89 435.00 297.81C435.00 301.98 433.26 303.50 431.14 303.50C429.01 303.50 427.28 301.98 427.28 297.81C427.28 292.89 429.21 288.34 431.14 288.34z" transform="rotate(-11 431.1 295.9)"/><ellipse cx="422.5" cy="302.1" rx="2.97" ry="8.67" transform="rotate(-7 422.5 302.1)"/><path d="M461.36 291.42C462.39 291.42 463.42 292.63 463.42 293.95C463.42 295.06 462.49 295.46 461.36 295.46C460.22 295.46 459.30 295.06 459.30 293.95C459.30 292.63 460.33 291.42 461.36 291.42z" transform="rotate(-7 461.4 293.4)"/><path d="M457.15 302.29C458.43 302.29 459.72 304.41 459.72 306.71C459.72 308.66 458.56 309.36 457.15 309.36C455.73 309.36 454.57 308.66 454.57 306.71C454.57 304.41 455.86 302.29 457.15 302.29z" transform="rotate(9 457.1 305.8)"/><ellipse cx="471.3" cy="306.3" rx="2.48" ry="2.97" transform="rotate(-8 471.3 306.3)"/><path d="M477.95 284.70C478.72 284.70 479.50 286.97 479.50 289.44C479.50 291.52 478.80 292.28 477.95 292.28C477.10 292.28 476.40 291.52 476.40 289.44C476.40 286.97 477.18 284.70 477.95 284.70z" transform="rotate(0 478.0 288.5)"/><path d="M486.87 287.10C487.64 287.10 488.41 291.65 488.41 296.58C488.41 300.74 487.72 302.26 486.87 302.26C486.02 302.26 485.32 300.74 485.32 296.58C485.32 291.65 486.09 287.10 486.87 287.10z" transform="rotate(-12 486.9 294.7)"/><ellipse cx="482.9" cy="307.1" rx="0.74" ry="2.48" transform="rotate(-6 482.9 307.1)"/><path d="M500.98 299.59C502.53 299.59 504.08 301.10 504.08 302.74C504.08 304.13 502.68 304.64 500.98 304.64C499.28 304.64 497.89 304.13 497.89 302.74C497.89 301.10 499.44 299.59 500.98 299.59z" transform="rotate(-17 501.0 302.1)"/><path d="M448.23 305.55C448.62 305.55 449.00 306.46 449.00 307.44C449.00 308.28 448.65 308.58 448.23 308.58C447.80 308.58 447.46 308.28 447.46 307.44C447.46 306.46 447.84 305.55 448.23 305.55z" transform="rotate(-9 448.2 307.1)"/><ellipse cx="526.5" cy="291.0" rx="1.49" ry="4.46" transform="rotate(-17 526.5 291.0)"/><path d="M544.33 290.41C544.84 290.41 545.36 292.23 545.36 294.20C545.36 295.87 544.89 296.47 544.33 296.47C543.76 296.47 543.30 295.87 543.30 294.20C543.30 292.23 543.81 290.41 544.33 290.41z" transform="rotate(8 544.3 293.4)"/><path d="M561.67 296.10C562.70 296.10 563.73 298.22 563.73 300.52C563.73 302.46 562.80 303.17 561.67 303.17C560.53 303.17 559.60 302.46 559.60 300.52C559.60 298.22 560.64 296.10 561.67 296.10z" transform="rotate(2 561.7 299.6)"/><ellipse cx="582.2" cy="295.9" rx="0.99" ry="2.48" transform="rotate(-11 582.2 295.9)"/><path d="M576.53 307.52C577.56 307.52 578.59 308.73 578.59 310.05C578.59 311.16 577.66 311.56 576.53 311.56C575.39 311.56 574.47 311.16 574.47 310.05C574.47 308.73 575.50 307.52 576.53 307.52z" transform="rotate(-1 576.5 309.5)"/><path d="M599.31 300.80C599.70 300.80 600.09 303.07 600.09 305.54C600.09 307.62 599.74 308.38 599.31 308.38C598.89 308.38 598.54 307.62 598.54 305.54C598.54 303.07 598.93 300.80 599.31 300.80z" transform="rotate(16 599.3 304.6)"/><ellipse cx="546.8" cy="312.0" rx="4.46" ry="7.43" transform="rotate(-14 546.8 312.0)"/><path d="M536.90 309.37C538.44 309.37 539.99 314.67 539.99 320.42C539.99 325.28 538.60 327.05 536.90 327.05C535.20 327.05 533.81 325.28 533.81 320.42C533.81 314.67 535.35 309.37 536.90 309.37z" transform="rotate(11 536.9 318.2)"/><path d="M416.77 319.35C417.55 319.35 418.32 322.38 418.32 325.67C418.32 328.44 417.62 329.46 416.77 329.46C415.92 329.46 415.23 328.44 415.23 325.67C415.23 322.38 416.00 319.35 416.77 319.35z" transform="rotate(-30 416.8 324.4)"/><ellipse cx="433.4" cy="321.2" rx="1.98" ry="2.97" transform="rotate(-2 433.4 321.2)"/><path d="M442.78 318.16C443.30 318.16 443.81 319.68 443.81 321.32C443.81 322.71 443.35 323.21 442.78 323.21C442.21 323.21 441.75 322.71 441.75 321.32C441.75 319.68 442.27 318.16 442.78 318.16z" transform="rotate(-0 442.8 320.7)"/><path d="M476.96 324.09C478.51 324.09 480.05 326.21 480.05 328.51C480.05 330.45 478.66 331.16 476.96 331.16C475.26 331.16 473.87 330.45 473.87 328.51C473.87 326.21 475.41 324.09 476.96 324.09z" transform="rotate(12 477.0 327.6)"/><ellipse cx="515.8" cy="321.2" rx="1.24" ry="3.72" transform="rotate(-4 515.8 321.2)"/><path d="M571.57 317.65C572.86 317.65 574.15 319.77 574.15 322.07C574.15 324.01 572.99 324.72 571.57 324.72C570.16 324.72 569.00 324.01 569.00 322.07C569.00 319.77 570.28 317.65 571.57 317.65z" transform="rotate(0 571.6 321.2)"/><path d="M562.90 321.65C563.29 321.65 563.68 322.56 563.68 323.54C563.68 324.38 563.33 324.68 562.90 324.68C562.48 324.68 562.13 324.38 562.13 323.54C562.13 322.56 562.52 321.65 562.90 321.65z" transform="rotate(7 562.9 323.2)"/><ellipse cx="584.0" cy="321.2" rx="0.74" ry="1.98" transform="rotate(17 584.0 321.2)"/><path d="M598.82 320.64C599.20 320.64 599.59 322.15 599.59 323.80C599.59 325.19 599.24 325.69 598.82 325.69C598.39 325.69 598.04 325.19 598.04 323.80C598.04 322.15 598.43 320.64 598.82 320.64z" transform="rotate(-6 598.8 323.2)"/><path d="M375.41 326.55C376.18 326.55 376.96 328.98 376.96 331.60C376.96 333.83 376.26 334.64 375.41 334.64C374.56 334.64 373.87 333.83 373.87 331.60C373.87 328.98 374.64 326.55 375.41 326.55z" transform="rotate(12 375.4 330.6)"/><ellipse cx="423.0" cy="341.0" rx="1.98" ry="4.95" transform="rotate(7 423.0 341.0)"/><path d="M439.81 331.23C440.84 331.23 441.87 334.56 441.87 338.18C441.87 341.23 440.94 342.34 439.81 342.34C438.67 342.34 437.75 341.23 437.75 338.18C437.75 334.56 438.78 331.23 439.81 331.23z" transform="rotate(5 439.8 336.8)"/><path d="M461.36 332.97C462.39 332.97 463.42 336.00 463.42 339.29C463.42 342.07 462.49 343.08 461.36 343.08C460.22 343.08 459.30 342.07 459.30 339.29C459.30 336.00 460.33 332.97 461.36 332.97z" transform="rotate(-3 461.4 338.0)"/><ellipse cx="531.4" cy="340.5" rx="1.98" ry="6.19" transform="rotate(-30 531.4 340.5)"/><path d="M548.04 333.75C549.33 333.75 550.62 335.57 550.62 337.54C550.62 339.21 549.46 339.82 548.04 339.82C546.63 339.82 545.47 339.21 545.47 337.54C545.47 335.57 546.76 333.75 548.04 333.75z" transform="rotate(-5 548.0 336.8)"/><path d="M556.71 334.26C557.23 334.26 557.74 335.78 557.74 337.42C557.74 338.81 557.28 339.31 556.71 339.31C556.15 339.31 555.68 338.81 555.68 337.42C555.68 335.78 556.20 334.26 556.71 334.26z" transform="rotate(-16 556.7 336.8)"/><ellipse cx="591.9" cy="344.2" rx="3.22" ry="3.47" transform="rotate(-13 591.9 344.2)"/><path d="M480.43 348.34C481.20 348.34 481.97 351.07 481.97 354.02C481.97 356.52 481.28 357.43 480.43 357.43C479.58 357.43 478.88 356.52 478.88 354.02C478.88 351.07 479.65 348.34 480.43 348.34z" transform="rotate(-15 480.4 352.9)"/><path d="M441.05 349.05C442.08 349.05 443.11 352.84 443.11 356.94C443.11 360.41 442.18 361.68 441.05 361.68C439.91 361.68 438.99 360.41 438.99 356.94C438.99 352.84 440.02 349.05 441.05 349.05z" transform="rotate(9 441.0 355.4)"/><ellipse cx="538.1" cy="357.8" rx="1.98" ry="5.45" transform="rotate(-9 538.1 357.8)"/><path d="M554.73 347.33C555.76 347.33 556.79 350.66 556.79 354.27C556.79 357.33 555.86 358.44 554.73 358.44C553.60 358.44 552.67 357.33 552.67 354.27C552.67 350.66 553.70 347.33 554.73 347.33z" transform="rotate(-12 554.7 352.9)"/><path d="M576.53 349.07C577.81 349.07 579.10 352.10 579.10 355.39C579.10 358.17 577.94 359.18 576.53 359.18C575.11 359.18 573.95 358.17 573.95 355.39C573.95 352.10 575.24 349.07 576.53 349.07z" transform="rotate(-15 576.5 354.1)"/><ellipse cx="455.7" cy="364.0" rx="2.97" ry="2.48" transform="rotate(12 455.7 364.0)"/><path d="M425.44 364.99C426.73 364.99 428.02 365.90 428.02 366.89C428.02 367.72 426.86 368.02 425.44 368.02C424.03 368.02 422.87 367.72 422.87 366.89C422.87 365.90 424.15 364.99 425.44 364.99z" transform="rotate(13 425.4 366.5)"/><path d="M556.71 366.23C557.74 366.23 558.77 367.14 558.77 368.13C558.77 368.96 557.85 369.26 556.71 369.26C555.58 369.26 554.65 368.96 554.65 368.13C554.65 367.14 555.68 366.23 556.71 366.23z" transform="rotate(6 556.7 367.7)"/><ellipse cx="596.3" cy="367.7" rx="1.49" ry="1.49" transform="rotate(-8 596.3 367.7)"/></g></svg>
<div class="ab" style="left:31px;top:401px;width:682px;height:12px;background:#4a4a4a;"></div>
<div class="ab" style="left:67px;top:401px;width:137px;height:12px;background:#535353;"></div>
<div class="ab" style="left:700.8px;top:65px;width:12.2px;height:336px;background:#4a4a4a;"></div>
<div class="ab" style="left:700.8px;top:401px;width:12.2px;height:12px;background:#525252;"></div>
<div class="ab" style="left:31px;top:413px;width:682px;height:3px;background:#3a3a3a;"></div>
<div class="ab" style="left:31px;top:416px;width:682px;height:20px;background:#424242;"></div>
<div class="ab" style="left:31px;top:416px;width:42px;height:20px;background:#535353;"></div>
<div class="ab" style="left:31px;top:436px;width:682px;height:28px;background:#535353;"></div>
<div class="ab" style="left:31px;top:463.6px;width:198px;height:1.6px;background:#424242;"></div>
<div class="ab" style="left:124.4px;top:441.1px;width:20px;height:18.6px;background:#3a3a3a;border-radius:2px"></div>
<div class="ab" style="left:171.5px;top:441px;width:1px;height:21px;background:#444444;"></div>
<div class="ab" style="left:31px;top:465.2px;width:197.3px;height:30.3px;background:#5c5c5c;"></div>
<div class="ab" style="left:31px;top:495.5px;width:197.3px;height:1.5px;background:#474747;"></div>
<div class="ab" style="left:215.4px;top:477px;width:8.8px;height:8.2px;background:#4c4c4c;"></div>
<div class="ab" style="left:31px;top:497px;width:64.6px;height:13.5px;background:#535353;"></div>
<div class="ab" style="left:95.6px;top:497px;width:132.7px;height:13.5px;background:#5f5f5f;"></div>
<div class="ab" style="left:31px;top:510.3px;width:197.3px;height:1px;background:#4a4a4a;"></div>
<div class="ab" style="left:31px;top:511.3px;width:197.3px;height:14.3px;background:#535353;"></div>
<div class="ab" style="left:31px;top:525.6px;width:197.3px;height:3.5px;background:#4a4a4a;"></div>
<div class="ab" style="left:228.2px;top:436px;width:1.2px;height:29px;background:#474747;"></div>
<div class="ab" style="left:228.2px;top:465px;width:6.6px;height:64px;background:#4d4d4d;"></div>
<div class="ab" style="left:230.3px;top:450.7px;width:450.3px;height:0.8px;background:#474747;"></div>
<div class="ab" style="left:278.5px;top:448.6px;width:1px;height:5.8px;background:#3c3c3c;"></div>
<div class="ab" style="left:321.9px;top:448.6px;width:1px;height:5.8px;background:#3c3c3c;"></div>
<div class="ab" style="left:365.9px;top:448.6px;width:1px;height:5.8px;background:#3c3c3c;"></div>
<div class="ab" style="left:409.8px;top:448.6px;width:1px;height:5.8px;background:#3c3c3c;"></div>
<div class="ab" style="left:454.2px;top:448.6px;width:1px;height:5.8px;background:#3c3c3c;"></div>
<div class="ab" style="left:498.0px;top:448.6px;width:1px;height:5.8px;background:#3c3c3c;"></div>
<div class="ab" style="left:541.9px;top:448.6px;width:1px;height:5.8px;background:#3c3c3c;"></div>
<div class="ab" style="left:585.8px;top:448.6px;width:1px;height:5.8px;background:#3c3c3c;"></div>
<div class="ab" style="left:629.7px;top:448.6px;width:1px;height:5.8px;background:#3c3c3c;"></div>
<div class="ab" style="left:671.7px;top:448.6px;width:1px;height:5.8px;background:#3c3c3c;"></div>
<div class="ab" style="left:236px;top:462.7px;width:239px;height:1.3px;background:#5aa0a0;"></div>
<div class="ab" style="left:680.6px;top:436px;width:1px;height:93px;background:#474747;"></div>
<div class="ab" style="left:680.6px;top:464.3px;width:32.4px;height:1px;background:#474747;"></div>
<div class="ab" style="left:701.4px;top:465.3px;width:11.4px;height:63.8px;background:#484848;"></div>
<div class="ab" style="left:702.6px;top:477.5px;width:8.4px;height:19.8px;background:#6e6e6e;"></div>
<div class="ab" style="left:234px;top:495px;width:441px;height:33px;background:#5c5368;"></div>
<div class="ab" style="left:236px;top:495px;width:438px;height:1px;background:#2e2e2e;"></div>
<div class="ab" style="left:234px;top:509.7px;width:441px;height:1.4px;background:#4e4759;"></div>
<div class="ab" style="left:234px;top:525.2px;width:441px;height:1.3px;background:#4e4759;"></div>
<div class="ab" style="left:235.8px;top:465.9px;width:437.7px;height:29.1px;background:#7e5cb0;border:1.4px solid #ececec;border-radius:2px"></div>
<div class="ab" style="left:237.2px;top:467.3px;width:46.7px;height:26.3px;background-color:#fff;background-image:linear-gradient(45deg,#dedede 25%,transparent 25%,transparent 75%,#dedede 75%),linear-gradient(45deg,#dedede 25%,transparent 25%,transparent 75%,#dedede 75%);background-size:8px 8px;background-position:0 0,4px 4px"></div>
<div class="ab" style="left:234.5px;top:450.5px;width:1.5px;height:79px;background:#b82626;"></div>
<div class="ab" style="left:31px;top:529.1px;width:682px;height:15.9px;background:#535353;"></div>
<div class="ab" style="left:256.9px;top:533.6px;width:63.3px;height:1.6px;background:#8e8e8e;"></div>
<div class="ab" style="left:347.7px;top:529.1px;width:354px;height:15.9px;background:#474747;"></div>
<div class="ab" style="left:359.7px;top:530.5px;width:219.3px;height:13.5px;background:#6a6a6a;"></div>
<div class="ab" style="left:713px;top:44px;width:2px;height:501px;background:#3a3a3a;"></div>
<div class="ab" style="left:712.9px;top:44px;width:2.1px;height:501px;background:#3a3a3a;"></div>
<div class="ab" style="left:715px;top:44px;width:308px;height:9px;background:#424242;"></div>
<div class="ab" style="left:715px;top:53px;width:28.5px;height:492px;background:#515151;"></div>
<div class="ab" style="left:715px;top:53px;width:28.5px;height:29.6px;background:#535353;"></div>
<div class="ab" style="left:715px;top:84.2px;width:28.5px;height:29.4px;background:#535353;"></div>
<div class="ab" style="left:715px;top:82.6px;width:28.5px;height:1.6px;background:#3e3e3e;"></div>
<div class="ab" style="left:715px;top:113.6px;width:28.5px;height:1.6px;background:#3e3e3e;"></div>
<div class="ab" style="left:743.5px;top:53px;width:1.8px;height:492px;background:#3a3a3a;"></div>
<div class="ab" style="left:745.3px;top:53px;width:278px;height:20.7px;background:#424242;"></div>
<div class="ab" style="left:776.8px;top:53px;width:44.80000000000007px;height:20.7px;background:#474747;"></div>
<div class="ab" style="left:821.1px;top:53px;width:1px;height:20.7px;background:#3a3a3a;"></div>
<div class="ab" style="left:821.6px;top:53px;width:47.89999999999998px;height:20.7px;background:#474747;"></div>
<div class="ab" style="left:869.0px;top:53px;width:1px;height:20.7px;background:#3a3a3a;"></div>
<div class="ab" style="left:869.5px;top:53px;width:42.0px;height:20.7px;background:#474747;"></div>
<div class="ab" style="left:911.0px;top:53px;width:1px;height:20.7px;background:#3a3a3a;"></div>
<div class="ab" style="left:745.3px;top:53px;width:31.5px;height:20.7px;background:#535353;"></div>
<div class="ab" style="left:745.3px;top:73.7px;width:278px;height:136.9px;background:#535353;"></div>
<div class="ab" style="left:759.6px;top:89.4px;width:14.6px;height:14px;background:#ffffff;border:1px solid #3c3c3c"></div>
<div class="ab" style="left:751.4px;top:81px;width:16.3px;height:16.1px;background:#aad4e2;border:1px solid #444;box-shadow:inset 0 0 0 1px #d8d8d8"></div>
<div class="ab" style="left:778.9px;top:78.8px;width:204.4px;height:116.2px;background:linear-gradient(to bottom,rgba(0,0,0,0),#000),linear-gradient(to right,#fff,#00bfff)"></div>
<div class="ab" style="left:995.8px;top:78.8px;width:14.6px;height:116.2px;background:linear-gradient(to bottom,#ff0000 0%,#ff00ff 16.7%,#0000ff 33.3%,#00ffff 50%,#00ff00 66.7%,#ffff00 83.3%,#ff0000 100%)"></div>
<div class="ab" style="left:745.3px;top:210.6px;width:278px;height:2.6px;background:#3a3a3a;"></div>
<div class="ab" style="left:745.3px;top:213.2px;width:278px;height:20.6px;background:#424242;"></div>
<div class="ab" style="left:745.3px;top:213.2px;width:31.90000000000009px;height:20.6px;background:#474747;"></div>
<div class="ab" style="left:776.7px;top:213.2px;width:1px;height:20.6px;background:#3a3a3a;"></div>
<div class="ab" style="left:777.2px;top:213.2px;width:44.39999999999998px;height:20.6px;background:#474747;"></div>
<div class="ab" style="left:821.1px;top:213.2px;width:1px;height:20.6px;background:#3a3a3a;"></div>
<div class="ab" style="left:821.6px;top:213.2px;width:56.4px;height:20.6px;background:#535353;"></div>
<div class="ab" style="left:745.3px;top:233.8px;width:278px;height:137.2px;background:#535353;"></div>
<div class="ab" style="left:745.3px;top:371px;width:278px;height:3px;background:#3a3a3a;"></div>
<div class="ab" style="left:745.3px;top:374px;width:278px;height:20.3px;background:#424242;"></div>
<div class="ab" style="left:780px;top:374px;width:44.39999999999998px;height:20.3px;background:#474747;"></div>
<div class="ab" style="left:823.9px;top:374px;width:1px;height:20.3px;background:#3a3a3a;"></div>
<div class="ab" style="left:824.4px;top:374px;width:33.0px;height:20.3px;background:#474747;"></div>
<div class="ab" style="left:856.9px;top:374px;width:1px;height:20.3px;background:#3a3a3a;"></div>
<div class="ab" style="left:745.3px;top:374px;width:34.7px;height:20.3px;background:#535353;"></div>
<div class="ab" style="left:745.3px;top:394.3px;width:278px;height:150.7px;background:#535353;"></div>
<div class="ab" style="left:748.3px;top:401.3px;width:64.7px;height:13.7px;background:#474747;border:1px solid #3e3e3e;border-radius:2px"></div>
<div class="ab" style="left:911.4px;top:401px;width:7.4px;height:13.7px;background:#393939;border-radius:4px"></div>
<div class="ab" style="left:745.3px;top:418px;width:278px;height:1px;background:#474747;"></div>
<div class="ab" style="left:748.3px;top:422.2px;width:96.3px;height:14px;background:#474747;border:1px solid #3e3e3e;border-radius:2px"></div>
<div class="ab" style="left:880.1px;top:423px;width:26px;height:11.1px;background:#474747;border-radius:2px 0 0 2px"></div>
<div class="ab" style="left:907.2px;top:423px;width:10px;height:11.1px;background:#474747;border-radius:0 2px 2px 0"></div>
<div class="ab" style="left:745.3px;top:439px;width:278px;height:1px;background:#474747;"></div>
<div class="ab" style="left:880.1px;top:443.9px;width:26px;height:11px;background:#474747;border-radius:2px 0 0 2px"></div>
<div class="ab" style="left:907.2px;top:443.9px;width:10px;height:11px;background:#474747;border-radius:0 2px 2px 0"></div>
<div class="ab" style="left:745.3px;top:460.5px;width:278px;height:66px;background:#4f4f4f;"></div>
<div class="ab" style="left:1009.8px;top:460.5px;width:13.2px;height:66px;background:#4b4b4b;"></div>
<div class="ab" style="left:745.3px;top:461.8px;width:22.3px;height:19.5px;background:#5c5c5c;"></div>
<div class="ab" style="left:767.6px;top:461.8px;width:242.2px;height:19.5px;background:#696969;"></div>
<div class="ab" style="left:745.3px;top:481.3px;width:264.5px;height:1px;background:#474747;"></div>
<div class="ab" style="left:745.3px;top:482.3px;width:264.5px;height:20.6px;background:#535353;"></div>
<div class="ab" style="left:745.3px;top:502.9px;width:264.5px;height:1px;background:#474747;"></div>
<div class="ab" style="left:767.6px;top:482.3px;width:0.8px;height:20.6px;background:#4a4a4a;"></div>
<div class="ab" style="left:770.3px;top:465px;width:24.7px;height:13.5px;background-color:#f4f6f8;border:1px solid #3a3a3a;background-image:linear-gradient(45deg,#d6dadd 25%,transparent 25%,transparent 75%,#d6dadd 75%),linear-gradient(45deg,#d6dadd 25%,transparent 25%,transparent 75%,#d6dadd 75%);background-size:4px 4px;background-position:0 0,2px 2px"></div>
<div class="ab" style="left:771px;top:486.9px;width:23.3px;height:12.4px;background:#ffffff;box-shadow:0 0 0 1px #3a3a3a"></div>
<div class="ab" style="left:745.3px;top:526.5px;width:278px;height:1px;background:#474747;"></div>
<div class="ab" style="left:0px;top:54px;width:29px;height:491px;background:#535353;"></div>
<div class="ab" style="left:3.2px;top:66.3px;width:22.2px;height:17.3px;background:#3c3c3c;border-radius:2px"></div>
<svg id="ov" width="1023" height="545" viewBox="0 0 1023 545"><rect x="949.5" y="8" width="8.5" height="1.6" fill="#e8e8e8"/>
<rect x="970.5" y="6" width="6" height="5" fill="none" stroke="#e8e8e8" stroke-width="1.2"/><path d="M972.5 6V4h6v5h-1.8" fill="none" stroke="#e8e8e8" stroke-width="1.2"/>
<path d="M998.8 4.2L1006.4 10.8M1006.4 4.2L998.8 10.8" stroke="#e8e8e8" stroke-width="1.5"/>
<line x1="4.5" y1="23" x2="4.5" y2="38.5" stroke="#3c3c3c" stroke-width="1" stroke-dasharray="1 1"/>
<path d="M21 26.2L14.8 31.6h1.9V37h3.2v-3.4h2.2V37h3.2v-5.4h1.9z" fill="#e6e6e6"/>
<g fill="#e6e6e6" stroke="#e6e6e6"><line x1="47.6" y1="31" x2="56.6" y2="31" stroke-width="1.2"/><line x1="52.1" y1="26.5" x2="52.1" y2="35.5" stroke-width="1.2"/><path stroke="none" d="M46.6 31l2.6 -2.3v4.6zM57.6 31l-2.6 -2.3v4.6zM52.1 25.5l-2.3 2.6h4.6zM52.1 36.5l-2.3 -2.6h4.6z"/></g>
<path d="M65.3 30.2l2.4 2.4 2.4-2.4" fill="none" stroke="#c8c8c8" stroke-width="1"/>
<rect x="82.3" y="27.6" width="7.6" height="7.3" rx="1" fill="#e2e2e2"/><path d="M83.8 31.2l1.8 1.8 3.2-3.6" fill="none" stroke="#3a3a3a" stroke-width="1.3"/>
<path d="M177.3 30.8l2.4 2.4 2.4-2.4" fill="none" stroke="#c8c8c8" stroke-width="1"/>
<rect x="198.4" y="27.9" width="6.8" height="6.8" rx="1" fill="none" stroke="#8a8a8a" stroke-width="0.9"/>
<g fill="#8e8e8e"><rect x="317.2" y="25.4" width="1" height="11.2"/><rect x="318.5" y="27.5" width="5.5" height="3"/><rect x="318.5" y="31.7" width="9" height="3.3"/><rect x="341.2" y="25.4" width="1" height="11.2"/><rect x="338" y="27.5" width="7" height="3"/><rect x="337.5" y="31.7" width="8.5" height="3.3"/><rect x="364.7" y="25.4" width="1" height="11.2"/><rect x="358.5" y="27.5" width="5.5" height="3"/><rect x="355.5" y="31.7" width="8.5" height="3.3"/><rect x="380.2" y="26.4" width="12" height="1"/><rect x="382.8" y="28.8" width="7" height="4.2"/><rect x="380.2" y="34.8" width="12" height="1"/><rect x="413.2" y="26.7" width="11" height="1"/><rect x="415" y="28" width="3.5" height="9"/><rect x="420.3" y="28" width="3.3" height="5"/><rect x="433" y="30.5" width="10.5" height="1"/><rect x="435" y="26.8" width="3.3" height="9.2"/><rect x="439.3" y="28.5" width="3.3" height="6"/><rect x="452.5" y="35.7" width="11" height="1"/><rect x="454.8" y="26.2" width="3.3" height="9"/><rect x="459.2" y="29.6" width="3.3" height="5.6"/><rect x="479.2" y="25.5" width="1" height="11.5"/><rect x="486.2" y="25.5" width="1" height="11.5"/><rect x="481.6" y="28" width="3" height="6"/></g>
<g fill="#e6e6e6"><circle cx="510.2" cy="31.3" r="1.4"/><circle cx="515.2" cy="31.3" r="1.4"/><circle cx="520.2" cy="31.3" r="1.4"/></g>
<g fill="none" stroke="#8c8c8c" stroke-width="1"><circle cx="591" cy="29.3" r="2.9"/><path d="M588.3 28c-2.8.4-4.4 1.6-4.4 2.8 0 1.4 1.4 2.6 3.6 3.6M592.5 35c2.5 0 4.5-.7 4.6-1.8.1-1.1-1-2.2-2.8-3"/><path d="M587.5 35h4.8" stroke-dasharray="1 .8"/></g><path d="M585.3 35.2l3.2-2.4v4.4z" fill="#8c8c8c"/>
<g fill="none" stroke="#8c8c8c" stroke-width="1"><path d="M606.6 25.8a5.8 5.8 0 1 1-3 4.2"/><circle cx="609.4" cy="31" r="2.6"/></g><path d="M604 25.6l3.6.2-1.8 3z" fill="#8c8c8c"/>
<g fill="none" stroke="#8c8c8c" stroke-width="1"><path d="M628.8 25v12.5"/><circle cx="625.3" cy="31.2" r="1.7"/><circle cx="632.3" cy="31.2" r="1.7"/><path d="M622.6 31.2l1-1.6M622.6 31.2l1 1.6M635 31.2l-1-1.6M635 31.2l-1 1.6"/></g><path d="M628.8 24.8l-1.8 2.2h3.6zM628.8 37.6l-1.8-2.2h3.6z" fill="#8c8c8c"/>
<g fill="none" stroke="#8c8c8c" stroke-width="1"><circle cx="648.3" cy="31" r="2.6"/></g><g fill="#8c8c8c"><path d="M648.3 25l-1.8 2.3h3.6zM648.3 37.2l-2.4-2.8h4.8zM642.2 31l2.4-2v4zM654.4 31l-2.4-2v4z"/></g><path d="M648.3 26.8v1.6M648.3 33.6v1M644.4 31h1.3M650.9 31h1.5" stroke="#8c8c8c" stroke-width="1"/>
<rect x="661" y="28.2" width="7" height="6" fill="#8c8c8c"/><path d="M668 31.2l2.2-2.2v4.4z" fill="#8c8c8c"/><path d="M675 26.2l-3.2 5 3.2 5" fill="none" stroke="#8c8c8c" stroke-width="1"/>
<circle cx="952.3" cy="31" r="4.2" fill="none" stroke="#e6e6e6" stroke-width="1.4"/><path d="M955.3 34l3.5 3.5" stroke="#e6e6e6" stroke-width="1.6"/>
<rect x="970.6" y="27.6" width="11" height="9" fill="none" stroke="#e6e6e6" stroke-width="1.2"/><rect x="971.6" y="28.6" width="2.4" height="7" fill="#7a7a7a"/><rect x="972" y="29.5" width="1.4" height="2" fill="#e6e6e6"/>
<path d="M990 30.3l2.4 2.4 2.4-2.4" fill="none" stroke="#c8c8c8" stroke-width="1"/>
<path d="M1003.7 30v7h11.5v-7" fill="none" stroke="#e6e6e6" stroke-width="1.4"/><path d="M1009.5 34V25.5M1006.5 28.3l3-3 3 3" fill="none" stroke="#e6e6e6" stroke-width="1.4"/>
<path d="M196.2 51.6l4.4 4.4M200.6 51.6l-4.4 4.4" stroke="#a8a8a8" stroke-width="0.9"/>
<path d="M3.5 46.5l2 1.7-2 1.7M6.5 46.5l2 1.7-2 1.7" fill="none" stroke="#e0e0e0" stroke-width="0.9"/>
<path d="M197.4 405l2.4 3-2.4 3" fill="none" stroke="#c8c8c8" stroke-width=".9"/>
<g fill="#c0c0c0"><rect x="702.2" y="423.3" width="7" height="1.1"/><rect x="702.2" y="425.3" width="7" height="1.1"/><rect x="702.2" y="427.3" width="7" height="1.1"/></g>
<g fill="#8c8c8c"><rect x="37.8" y="447.6" width="1.5" height="5.6"/><path d="M46 447.6v5.6l-5.6-2.8z"/><path d="M66.5 447.6v5.6l-5.8-2.8z"/><rect x="67.6" y="447.6" width="1.5" height="5.6"/></g>
<g fill="#e4e4e4"><path d="M85.8 446.6v7.4l7.2-3.7z"/><rect x="108.2" y="447.3" width="1.6" height="6.2"/><path d="M111 447.3v6.2l6-3.1z"/></g>
<path d="M129.8 448.3h2.2l3.4-2.8v9l-3.4-2.8h-2.2z" fill="#e4e4e4"/><path d="M136.8 447.8a3 3 0 0 1 0 5M138.6 446.3a5 5 0 0 1 0 8" fill="none" stroke="#e4e4e4" stroke-width="1"/>
<circle cx="157.2" cy="450.3" r="2.9" fill="none" stroke="#e4e4e4" stroke-width="2.2" stroke-dasharray="1.4 .9"/><circle cx="157.2" cy="450.3" r="2.3" fill="none" stroke="#e4e4e4" stroke-width="1.4"/><path d="M163.8 456.2h2.6l-1.3 1.2z" fill="#e4e4e4"/>
<g fill="none" stroke="#e4e4e4" stroke-width="1.2"><circle cx="182.5" cy="447.6" r="2"/><circle cx="182.5" cy="453.4" r="2"/><path d="M184.2 448.6l8 5M184.2 452.4l8-5"/></g>
<rect x="206.3" y="446.3" width="8.6" height="8.6" fill="none" stroke="#e4e4e4" stroke-width="1"/><path d="M214.9 446.3v8.6h-8.6z" fill="#e4e4e4"/>
<path d="M36.3 478.3l3.5 3.6 3.5-3.6" fill="none" stroke="#b8b8b8" stroke-width=".9"/>
<g fill="#cfcfcf"><rect x="206.4" y="476.8" width="1.6" height="8"/><rect x="213" y="476.8" width="1.6" height="8"/><rect x="208.6" y="478" width="3.8" height="2.6"/><rect x="208.6" y="481.4" width="3.8" height="2.4"/></g>
<path d="M217.4 479.8l2.4 2.4 2.4-2.4" fill="none" stroke="#c0c0c0" stroke-width=".9"/>
<path d="M47.6 501.2v6.6l-3.4-3.3z" fill="#8a8a8a"/><path d="M57 504.1l3.2-3.2 3.2 3.2-3.2 3.2z" fill="#f2dc3c"/><path d="M72.2 501.2v6.6l3.6-3.3z" fill="#f0f0f0"/>
<circle cx="87.3" cy="505.0" r="3.5" fill="none" stroke="#e0e0e0" stroke-width="1.1"/><path d="M85.8 500.3h3M87.3 500.59999999999997v1M87.3 505.0l1.5-1.5M90.3 501.4l1-1" stroke="#e0e0e0" stroke-width="1"/>
<circle cx="87.3" cy="519.0" r="3.5" fill="none" stroke="#e0e0e0" stroke-width="1.1"/><path d="M85.8 514.3000000000001h3M87.3 514.6v1M87.3 519.0l1.5-1.5M90.3 515.4000000000001l1-1" stroke="#e0e0e0" stroke-width="1"/>
<path d="M686.4 480.6h8.3M690.55 476.5v8.3" stroke="#f0f0f0" stroke-width="1.6"/>
<path d="M704 474l2.8-2.6 2.8 2.6M704 519.8l2.8 2.6 2.8-2.6" fill="none" stroke="#9a9a9a" stroke-width=".9"/>
<path d="M287.2 470.2l2.8 3 2.8-3" fill="none" stroke="#e8e8e8" stroke-width=".9"/>
<rect x="665" y="468.7" width="7.2" height="8.3" fill="#c8c8c8"/><path d="M667.3 470.6v4.6l3.3-2.3z" fill="#7e5cb0"/>
<rect x="230.9" y="452.4" width="3" height="12" rx="1" fill="none" stroke="#c4c4c4" stroke-width="1"/><rect x="231.9" y="456.6" width="1" height="3" fill="#c4c4c4"/>
<rect x="675.5" y="452.2" width="4" height="12" rx="1" fill="none" stroke="#e8e8e8" stroke-width="1"/><rect x="676.8" y="455" width="1.4" height="6" fill="#e8e8e8"/>
<path d="M231.6 440.4h6.6a1 1 0 0 1 1 1v5.2l-4.2 3.8-4.4-3.8v-5.2a1 1 0 0 1 1-1z" fill="#2a78d6" stroke="#b8d8f0" stroke-width=".8"/><g fill="#bfe0ff"><rect x="232.6" y="443.2" width=".8" height="2.4"/><rect x="234.2" y="443.2" width=".8" height="2.4"/><rect x="235.8" y="443.2" width="1.6" height="2.4"/></g>
<path d="M235.4 500.7l3.4 3.5-3.4 3.5-3.4-3.5z" fill="none" stroke="#e4e4e4" stroke-width="1"/>
<path d="M411.4 500.4l3.8 3.8-3.8 3.8-3.8-3.8z" fill="#f2e040" stroke="#f6f6f6" stroke-width=".9"/><path d="M411.4 501.2l3 3-3 3z" fill="#d9ad1c"/>
<path d="M252.8 497.5C248 494.5 243.5 492.8 239.6 492.4C235 491.6 231 491.4 227.2 491.6C222 492 219 492.8 216.5 494C212.5 496 210.3 498.5 209.9 501.5C209.6 504 210.2 505.8 211.6 507.3C214.5 510 218 511.8 222.3 513.9C226 516 229.5 519 233 520.5C236 521.2 239 520.8 241.3 519.7C244 518.3 246 516.5 247 513.9C248.2 511 248.8 508.5 248.7 505.6C248.6 503.2 248.5 501 248.3 499.4" fill="none" stroke="#e41a1a" stroke-width="1.4" stroke-linecap="round"/>
<path d="M420.1 498.6C418.8 497.2 417.5 496.2 415.8 495.3C413.8 494 412 493 410 492.3C407 491.6 404.5 491.4 401.9 491.6C399.5 491.8 398 492.1 396.7 492.7C395.3 493.6 394.7 494.6 394.5 496C394.2 498 394.2 500 394.5 501.9C395 504 396 506 397.5 507.8C399 509.6 400.7 511 402.6 512.2C404.3 513.3 406 514.3 407.8 514.7C409.5 515 411.3 514.8 412.9 514C414.5 513.2 416 512 417.3 510.7C418.8 509.3 420.3 507.8 421 506.3C421.4 505 421.3 503.8 421 502.6C420.8 502 420.5 501.7 420.2 501.5" fill="none" stroke="#e41a1a" stroke-width="1.4" stroke-linecap="round"/>
<g fill="none" stroke="#d8d8d8" stroke-width="1"><rect x="35.8" y="535.3" width="3.4" height="4"/><rect x="40.3" y="535.3" width="3.4" height="4"/><rect x="44.8" y="535.3" width="3.4" height="4"/></g>
<path d="M58.5 541c.5-4 3-6 7-6v-2.5l3.5 3.8-3.5 3.8v-2.5c-3 0-5.2 1.2-7 3.4z" fill="#d8d8d8"/>
<path d="M236.9 538.4l2.5-2.8 1.3 1 1.5-1.5 2.5 3.3z" fill="#e0e0e0"/>
<path d="M276.5 536l4.2 6.8h-8.4z" fill="#f0f0f0"/>
<path d="M329.5 538.6l4-4.2 2 1.5 2.2-2.6 4.8 5.3z" fill="#e0e0e0"/>
<path d="M355.6 534l-2.4 3 2.4 3M692.8 534l2.4 3-2.4 3" fill="none" stroke="#9a9a9a" stroke-width=".9"/>
<path d="M737.5 46.6l-1.9 1.7 1.9 1.7M734.6 46.6l-1.9 1.7 1.9 1.7" fill="none" stroke="#e0e0e0" stroke-width=".9"/>
<path d="M1011.6 46.6l1.9 1.7-1.9 1.7M1014.5 46.6l1.9 1.7-1.9 1.7" fill="none" stroke="#e0e0e0" stroke-width=".9"/>
<line x1="722" y1="56.6" x2="736" y2="56.6" stroke="#3c3c3c" stroke-width="1.2" stroke-dasharray="1.3 1.1"/><line x1="722" y1="87.6" x2="736" y2="87.6" stroke="#3c3c3c" stroke-width="1.2" stroke-dasharray="1.3 1.1"/>
<g fill="#d8d8d8"><path d="M726 64.2l3.6 1.8v4.2l-3.6 1.8-3.6-1.8v-4.2z"/><rect x="732" y="64.2" width="3" height="3.2"/><rect x="732" y="68.4" width="3" height="3.6"/><rect x="723" y="74" width="12.5" height="2.6"/></g><path d="M722.6 66l3.4 1.7 3.4-1.7M726 67.7v4" stroke="#535353" stroke-width=".7" fill="none"/><rect x="724" y="74.8" width="9" height="1" fill="#535353"/>
<g fill="none" stroke="#d8d8d8" stroke-width=".9"><rect x="724.3" y="93.6" width="3.4" height="3.4"/><rect x="724.3" y="98.2" width="3.4" height="3.4"/></g><rect x="724" y="102.4" width="4" height="3.8" fill="#d8d8d8"/><path d="M731.5 95.4c3-.4 5.4 2 4.6 5.8-.4 2.4-2.2 4.6-4.4 5.4" fill="none" stroke="#d8d8d8" stroke-width="1.2"/><path d="M730 96.2l2.8-2.6v4.8z" fill="#d8d8d8"/>
<g fill="#c0c0c0"><rect x="1011.2" y="61.5" width="7" height="1.1"/><rect x="1011.2" y="63.5" width="7" height="1.1"/><rect x="1011.2" y="65.5" width="7" height="1.1"/></g>
<path d="M990.8 127.5l3.6 2.4-3.6 2.4z" fill="#f0f0f0"/>
<circle cx="825.2" cy="91.6" r="3.9" fill="none" stroke="#1e1e1e" stroke-width="1"/>
<g fill="#c0c0c0"><rect x="1011.2" y="221.6" width="7" height="1.1"/><rect x="1011.2" y="223.6" width="7" height="1.1"/><rect x="1011.2" y="225.6" width="7" height="1.1"/></g>
<circle cx="786" cy="256.5" r="3.3" fill="none" stroke="#d4d4d4" stroke-width="1.1"/><path d="M786 253.2a3.3 3.3 0 0 1 0 6.6z" fill="#d4d4d4"/><g stroke="#d4d4d4" stroke-width="1"><path d="M786 250.6v1.4M786 261v1.4M780 256.5h1.4M790.6 256.5h1.4M781.8 252.3l1 1M789.2 259.7l1 1M781.8 260.7l1-1M789.2 253.3l1-1"/></g>
<path d="M797.2 261.2v-3l1-1.5.8 1 1-3.5.8 2 .9-3.8.8 3 1-2.5.8 2.8 1-3.2.8 3 .9-1.8 1 2.5.9-1v5z" fill="#d4d4d4"/>
<rect x="816.3" y="251.3" width="11.7" height="10" fill="none" stroke="#d4d4d4" stroke-width=".9"/><path d="M820.2 251.3v10M824.1 251.3v10M816.3 254.6h11.7M816.3 258h11.7" stroke="#8a8a8a" stroke-width=".6"/><path d="M818 261c3-1 4.5-3 5.3-5.2s1.7-3.8 3.8-4.4" fill="none" stroke="#d4d4d4" stroke-width="1"/>
<rect x="834.2" y="252" width="11.8" height="9.8" fill="none" stroke="#d4d4d4" stroke-width="1"/><path d="M834.2 261.8l11.8-9.8v9.8z" fill="#d4d4d4"/><path d="M835.6 255h3.2M837.2 253.4v3.2" stroke="#d4d4d4" stroke-width=".9"/><path d="M840.6 259.2h3" stroke="#535353" stroke-width=".9"/>
<path d="M852.6 252.4h10.6l-5.3 9.6z" fill="none" stroke="#d4d4d4" stroke-width="1.1"/><path d="M855 254h5.8l-2.9 5.3z" fill="#6a6a6a"/>
<rect x="771.2" y="271.4" width="12.2" height="10.8" fill="none" stroke="#d4d4d4" stroke-width=".9"/><defs><linearGradient id="hs" x1="0" x2="1"><stop offset="0" stop-color="#333"/><stop offset="1" stop-color="#e0e0e0"/></linearGradient></defs><rect x="771.8" y="276" width="11" height="5.8" fill="url(#hs)"/><g fill="#d4d4d4"><rect x="772" y="272" width="3" height="3.4"/><rect x="775.8" y="272" width="3" height="3.4"/><rect x="779.6" y="272" width="3" height="3.4"/></g>
<path d="M795.2 271.8v8M790 274.4h10.4M790.5 274.4l-1.8 4M790.5 274.4l1.8 4M799.8 274.4l-1.8 4M799.8 274.4l1.8 4" fill="none" stroke="#d4d4d4" stroke-width=".9"/><path d="M788.5 278.4h4a2 2 0 0 1-4 0zM797.8 278.4h4a2 2 0 0 1-4 0z" fill="#d4d4d4"/><circle cx="795.2" cy="272.2" r="1" fill="#d4d4d4"/>
<rect x="807.2" y="271.6" width="11.6" height="10.6" fill="none" stroke="#d4d4d4" stroke-width="1"/><rect x="813" y="271.6" width="5.8" height="10.6" fill="#d4d4d4"/>
<path d="M824.2 274.2h2.2l1-1.4h3.4l1 1.4h2.4v6.6h-10z" fill="#d4d4d4"/><circle cx="829.2" cy="277.4" r="2" fill="#535353"/><circle cx="834.6" cy="281" r="2.6" fill="#535353" stroke="#d4d4d4" stroke-width=".9"/>
<circle cx="848.6" cy="274.5" r="3.6" fill="#8e8e8e"/><circle cx="846" cy="279" r="3.6" fill="#d0d0d0" fill-opacity=".85"/><circle cx="851.2" cy="279" r="3.6" fill="#b0b0b0" fill-opacity=".85"/>
<rect x="861.2" y="271.4" width="11.8" height="10.8" fill="none" stroke="#d4d4d4" stroke-width="1"/><path d="M865.1 271.4v10.8M869.1 271.4v10.8M861.2 275h11.8M861.2 278.6h11.8" stroke="#d4d4d4" stroke-width=".9"/>
<rect x="780.2" y="292.2" width="12" height="9.6" fill="none" stroke="#d4d4d4" stroke-width="1"/><path d="M782.2 299.8c1.5-3.5 4.5-5.5 8-5.5" fill="none" stroke="#d4d4d4" stroke-width="1.4"/><circle cx="786.2" cy="297" r="2.3" fill="none" stroke="#d4d4d4" stroke-width="1"/>
<defs><linearGradient id="ps" x1="0" y1="1" x2="1" y2="0"><stop offset="0" stop-color="#444"/><stop offset=".5" stop-color="#ddd"/><stop offset="1" stop-color="#555"/></linearGradient></defs><rect x="798.2" y="292.2" width="12" height="9.6" fill="url(#ps)" stroke="#d4d4d4" stroke-width="1"/>
<rect x="816.3" y="292.2" width="12" height="9.6" fill="#e0e0e0" stroke="#d4d4d4" stroke-width="1"/><path d="M816.5 301.5l3-3 1 1 2.5-3 1 1 3.8-3.8v8z" fill="#3a3a3a"/>
<rect x="834.2" y="292.2" width="12" height="9.6" fill="#7a7a7a" stroke="#d4d4d4" stroke-width="1"/><path d="M834.2 292.2l6 4.8 6-4.8zM834.2 301.8l6-4.8 6 4.8z" fill="#d8d8d8"/>
<defs><linearGradient id="gm" x1="0" x2="1"><stop offset="0" stop-color="#222"/><stop offset="1" stop-color="#eee"/></linearGradient></defs><rect x="852" y="292.2" width="12" height="9.6" fill="url(#gm)" stroke="#d4d4d4" stroke-width="1"/>
<g fill="#c0c0c0"><rect x="1011.2" y="382.4" width="7" height="1.1"/><rect x="1011.2" y="384.4" width="7" height="1.1"/><rect x="1011.2" y="386.4" width="7" height="1.1"/></g>
<circle cx="755.6" cy="407.2" r="2.5" fill="none" stroke="#e0e0e0" stroke-width="1.1"/><path d="M757.4 409l2 2" stroke="#e0e0e0" stroke-width="1.3"/>
<path d="M804.2 406.8l2.5 2.5 2.5-2.5" fill="none" stroke="#c0c0c0" stroke-width=".9"/>
<rect x="821.6" y="404.4" width="9" height="7.6" fill="none" stroke="#d8d8d8" stroke-width="1"/><path d="M823.2 410.4l2-2.4 1.2 1.2 1.2-1.6 1.6 2.8z" fill="#d8d8d8"/>
<circle cx="844.3" cy="408.5" r="3.8" fill="none" stroke="#d8d8d8" stroke-width="1.1"/><path d="M847 405.8a3.8 3.8 0 0 1-5.4 5.4z" fill="#d8d8d8"/>
<path d="M859 405h7.8v2.2h-.8l-.4-1h-2v5.2l1.1.4v.6h-3.8v-.6l1.1-.4v-5.2h-2l-.4 1h-.8z" fill="#d8d8d8"/>
<rect x="877.2" y="405.2" width="6.6" height="6.6" fill="none" stroke="#d8d8d8" stroke-width="1"/><g fill="#d8d8d8"><circle cx="877.2" cy="405.2" r="1.2"/><circle cx="883.8" cy="405.2" r="1.2"/><circle cx="877.2" cy="411.8" r="1.2"/><circle cx="883.8" cy="411.8" r="1.2"/></g>
<path d="M897.2 404.2h3.6l2.2 2.2v6.6h-6.8v-3.6" fill="none" stroke="#d8d8d8" stroke-width="1"/><path d="M900.6 404.2v2.4h2.4" fill="none" stroke="#d8d8d8" stroke-width=".8"/><rect x="894.8" y="409.4" width="4" height="3.6" fill="#d8d8d8"/><path d="M895.6 409.4v-1a1.2 1.2 0 0 1 2.4 0v1" fill="none" stroke="#d8d8d8" stroke-width=".8"/>
<circle cx="915.1" cy="404.6" r="2.7" fill="#e8e8e8"/>
<path d="M836.3 428.3l2.5 2.5 2.5-2.5" fill="none" stroke="#c0c0c0" stroke-width=".9"/>
<path d="M909.8 427.6l2.3 2.3 2.3-2.3" fill="none" stroke="#c0c0c0" stroke-width=".9"/>
<g fill="#9a9a9a"><rect x="774.2" y="446" width="2.2" height="2.2"/><rect x="778.5" y="446" width="2.2" height="2.2"/><rect x="776.4" y="448.2" width="2.2" height="2.2"/><rect x="774.2" y="450.4" width="2.2" height="2.2"/><rect x="778.5" y="450.4" width="2.2" height="2.2"/></g><rect x="773.8" y="445.6" width="9" height="8.4" fill="none" stroke="#9a9a9a" stroke-width=".7"/>
<path d="M799.8 445.5c-2 1.3-4.8 4.4-6 6.5l1.5 1.2c1.9-1.5 4.7-5 5.4-6.8z" fill="#8e8e8e"/><path d="M793 452.8c-1.4.3-2.2 1.3-2.6 3 1.5.2 3-.3 3.8-1.8z" fill="#8e8e8e"/>
<g fill="#e0e0e0" stroke="#e0e0e0"><line x1="807.15" y1="449.4" x2="815.65" y2="449.4" stroke-width="1.2"/><line x1="811.4" y1="445.15" x2="811.4" y2="453.65" stroke-width="1.2"/><path stroke="none" d="M806.15 449.4l2.6 -2.3v4.6zM816.65 449.4l-2.6 -2.3v4.6zM811.4 444.15l-2.3 2.6h4.6zM811.4 454.65l-2.3 -2.6h4.6z"/></g>
<path d="M825 444.6v8h8M822.6 447h8v8.5" fill="none" stroke="#d8d8d8" stroke-width="1.1"/><path d="M829.5 444.5l3.5 3.5" stroke="#d8d8d8" stroke-width=".9"/>
<path d="M842.6 449.5v-1.5a2.3 2.3 0 0 1 4.6 0v1.5" fill="none" stroke="#e0e0e0" stroke-width="1.2"/><rect x="841.2" y="449.5" width="7.4" height="5.2" fill="#e0e0e0"/><rect x="844.4" y="451.2" width="1" height="1.6" fill="#535353"/>
<path d="M909.8 448.4l2.3 2.3 2.3-2.3" fill="none" stroke="#c0c0c0" stroke-width=".9"/>
<path d="M751.6 472.6c1.3-2.3 3-3.3 5-3.3s3.7 1 5 3.3c-1.3 2.3-3 3.3-5 3.3s-3.7-1-5-3.3z" fill="#e4e4e4"/><circle cx="756.6" cy="472.6" r="2" fill="#535353"/><circle cx="756.6" cy="472.6" r="1" fill="#e4e4e4"/>
<path d="M751.6 493.2c1.3-2.3 3-3.3 5-3.3s3.7 1 5 3.3c-1.3 2.3-3 3.3-5 3.3s-3.7-1-5-3.3z" fill="#e4e4e4"/><circle cx="756.6" cy="493.2" r="2" fill="#535353"/><circle cx="756.6" cy="493.2" r="1" fill="#e4e4e4"/>
<path d="M769.2 469.4v-6.2h8.8M787.4 463.2h8.6v6.2M796 474.4v6h-8.6M778 480.4h-8.8v-6" fill="none" stroke="#f0f0f0" stroke-width="1"/>
<rect x="783.5" y="469.3" width="11.5" height="9.2" fill="#3a3a3a"/><path d="M787.2 471h3.4l1.8 1.8v4.4h-5.2z" fill="#e8e8e8"/><rect x="786" y="475.6" width="3.2" height="2" fill="#3a3a3a"/><rect x="786.4" y="476" width="2.4" height="1.4" fill="#e8e8e8"/>
<g fill="none" stroke="#8a8a8a" stroke-width="1.1"><rect x="871.2" y="532.6" width="5.6" height="4.4" rx="2.2"/><rect x="875.6" y="532.6" width="5.6" height="4.4" rx="2.2"/></g>
<path d="M901.5 539.6h2.4l-1.2 1.2z" fill="#e0e0e0"/>
<rect x="911.4" y="530.8" width="10" height="8" fill="#e0e0e0"/><circle cx="916.4" cy="534.8" r="2.5" fill="#535353"/>
<circle cx="937.8" cy="534.9" r="4.3" fill="none" stroke="#e0e0e0" stroke-width="1.1"/><path d="M940.9 531.8a4.3 4.3 0 0 1-6.1 6.1z" fill="#e0e0e0"/><path d="M941.2 540.2h2.4l-1.2 1.2z" fill="#e0e0e0"/>
<path d="M952.4 531h4l1 1.3h4.6v7h-9.6z" fill="#e0e0e0"/>
<rect x="973.4" y="530.8" width="8.8" height="8.6" fill="none" stroke="#e0e0e0" stroke-width="1.1"/><path d="M977.8 532.6v5M975.3 535.1h5" stroke="#e0e0e0" stroke-width="1.1"/>
<path d="M993 531.6h8.6M995.7 531.6v-1.2h3.2v1.2M994 532.8v7.2h6.6v-7.2M996.1 533.8v5M998.5 533.8v5" fill="none" stroke="#e0e0e0" stroke-width="1.1"/>
<line x1="7" y1="57.2" x2="22" y2="57.2" stroke="#3e3e3e" stroke-width="1.2" stroke-dasharray="1.2 1"/>
<g fill="#e8e8e8" stroke="#e8e8e8"><line x1="9.5" y1="75.2" x2="19.5" y2="75.2" stroke-width="1.2"/><line x1="14.5" y1="70.2" x2="14.5" y2="80.2" stroke-width="1.2"/><path stroke="none" d="M8.5 75.2l2.6 -2.3v4.6zM20.5 75.2l-2.6 -2.3v4.6zM14.5 69.2l-2.3 2.6h4.6zM14.5 81.2l-2.3 -2.6h4.6z"/></g>
<path d="M24.400000000000002 78.8v2.8h-2.8z" fill="#bdbdbd"/>
<ellipse cx="15" cy="94.1" rx="6" ry="5.2" fill="none" stroke="#d8d8d8" stroke-width="1.1" stroke-dasharray="2.2 1.3"/>
<path d="M24.6 98.6v2.8h-2.8z" fill="#bdbdbd"/>
<path d="M9.3 108.3L13.8 111.6L20.8 107L20.6 115.2L15.6 117.6" fill="none" stroke="#d8d8d8" stroke-width="1.1" stroke-linejoin="round"/><circle cx="14.6" cy="115.6" r="1.4" fill="none" stroke="#d8d8d8" stroke-width="1"/><path d="M13.4 116.4L9.4 118.6M14.2 117L12.2 120.2" stroke="#d8d8d8" stroke-width="1.1"/>
<path d="M24.6 118.2v2.8h-2.8z" fill="#bdbdbd"/>
<circle cx="12.6" cy="134.3" r="4.4" fill="none" stroke="#d8d8d8" stroke-width="1" stroke-dasharray="1.2 1"/><path d="M22.2 128.6c-1 .4-2.4 1.6-3.8 3.2-1.2 1.3-2 2.2-2.6 3.2l1.6 1.3c1-.8 2-1.8 3-3.2 1-1.3 1.7-2.8 1.8-4.5z" fill="#d8d8d8"/><path d="M15.6 135.4c-1.6.4-2.2 1.4-2.6 3.8 1.8-.2 3.4-.8 4-2.6z" fill="#d8d8d8"/>
<path d="M24.6 137.6v2.8h-2.8z" fill="#bdbdbd"/>
<path d="M10.5 147v10h10M7.5 150h10v10.5" fill="none" stroke="#d8d8d8" stroke-width="1.6"/>
<path d="M24.6 156.6v2.8h-2.8z" fill="#bdbdbd"/>
<rect x="9.2" y="166.8" width="12" height="10.5" fill="none" stroke="#d8d8d8" stroke-width="1.2"/><path d="M9.2 166.8l12 10.5M21.2 166.8l-12 10.5" stroke="#d8d8d8" stroke-width="1.1"/>
<path d="M20.6 187.5c-.9-.9-2.2-.8-3 0l-1.3 1.3-1-1-1 1 1 1-5.4 5.4-.7 2.5 2.5-.7 5.4-5.4 1 1 1-1-1-1 1.3-1.3c.8-.8.9-2.1.2-2.8z" fill="none" stroke="#d8d8d8" stroke-width="1.1"/><path d="M16.3 188.8l3 3" stroke="#d8d8d8" stroke-width="2"/>
<path d="M24.6 195.8v2.8h-2.8z" fill="#bdbdbd"/>
<g transform="rotate(-40 15.2 211.2)"><rect x="8.2" y="208" width="14" height="6.4" rx="3" fill="#d8d8d8"/><rect x="12.8" y="208.6" width="4.8" height="5.2" fill="#535353"/><circle cx="15.2" cy="211.2" r="1.6" fill="#d8d8d8"/></g><path d="M8.4 207.6a2.8 2.8 0 0 1 4.6-3.4" fill="none" stroke="#d8d8d8" stroke-width="1" stroke-dasharray="1.2 .9"/>
<path d="M24.6 214.8v2.8h-2.8z" fill="#bdbdbd"/>
<path d="M20.5 225.2c-2 1.3-5.5 5-6.8 7.2l1.6 1.3c2.1-1.6 5.5-5.6 6.3-7.5z" fill="#d8d8d8"/><path d="M13.1 233c-1.6.3-2.7 1.6-3.2 4 1.8.2 3.6-.4 4.6-2.3z" fill="#d8d8d8"/>
<path d="M24.6 234.8v2.8h-2.8z" fill="#bdbdbd"/>
<circle cx="15.5" cy="246.6" r="2.6" fill="#d8d8d8"/><path d="M14.4 248.5h2.2v2h3.2c.8 0 1.3.6 1.3 1.3v1.4h-11v-1.4c0-.7.5-1.3 1.3-1.3h3z" fill="#d8d8d8"/><rect x="10.2" y="254.4" width="10.6" height="1.2" fill="#d8d8d8"/>
<path d="M24.6 253.8v2.8h-2.8z" fill="#bdbdbd"/>
<path d="M21.5 264.5c-2 1.3-5 4.6-6.3 6.8l1.6 1.3c2-1.6 5-5.3 5.8-7.2z" fill="#d8d8d8"/><path d="M14.8 271.8c-1.6.3-2.7 1.6-3.2 4 1.8.2 3.6-.4 4.6-2.3z" fill="#d8d8d8"/><path d="M8.5 268.5c1.3-1.8 3.2-2.3 5.4-1.6" fill="none" stroke="#d8d8d8" stroke-width="1"/><path d="M8 266.2v3h3z" fill="#d8d8d8"/><circle cx="19.5" cy="272" r=".6" fill="#d8d8d8"/><circle cx="21" cy="274" r=".6" fill="#d8d8d8"/>
<path d="M24.6 273.6v2.8h-2.8z" fill="#bdbdbd"/>
<g transform="rotate(-35 15 288.6)"><rect x="9.2" y="286" width="11.6" height="5.4" rx="1" fill="none" stroke="#d8d8d8" stroke-width="1.1"/><rect x="14" y="286" width="6.8" height="5.4" fill="#d8d8d8"/></g><path d="M12.6 294.2h8.6" stroke="#d8d8d8" stroke-width="1"/>
<path d="M24.6 292.5v2.8h-2.8z" fill="#bdbdbd"/>
<defs><linearGradient id="gr" x1="0" y1="0" x2="1" y2="0.3"><stop offset="0" stop-color="#2a2a2a"/><stop offset="1" stop-color="#ffffff"/></linearGradient></defs><rect x="9.5" y="303.2" width="11.5" height="10.5" fill="url(#gr)" stroke="#d8d8d8" stroke-width=".9"/>
<path d="M24.6 312.2v2.8h-2.8z" fill="#bdbdbd"/>
<path d="M12.6 325.5c.4-1.8 2-3 4-3 2.4 0 4 1.6 4 3.8 0 2.4-1.8 4.4-4.2 4.8-1.2.2-2 0-2.6-.6z" fill="#d8d8d8"/><path d="M10.6 333l5.2-6" stroke="#d8d8d8" stroke-width="2.2" stroke-linecap="round"/><path d="M14.8 328.8l2.4-2.6" stroke="#8a8a8a" stroke-width=".7"/>
<path d="M24.400000000000002 331.8v2.8h-2.8z" fill="#bdbdbd"/>
<circle cx="16.5" cy="345.5" r="3.8" fill="#d8d8d8"/><path d="M13.6 348.4l-4.2 4.2" stroke="#d8d8d8" stroke-width="1.5"/>
<path d="M24.6 351v2.8h-2.8z" fill="#bdbdbd"/>
<path d="M19.6 361.5l1.8 1.8-2 2-3.7 6.3-5.5 1.6 1.6-5.5 6.3-3.7z" fill="none" stroke="#d8d8d8" stroke-width="1.2"/><circle cx="14.4" cy="368.2" r="1" fill="#d8d8d8"/><path d="M10.5 372.5l3.2-3.2" stroke="#d8d8d8" stroke-width=".9"/>
<path d="M24.6 370.7v2.8h-2.8z" fill="#bdbdbd"/>
<path d="M10.8 381.8h9.4v2.6h-.9l-.5-1.3h-2.6v7.3l1.4.5v.8h-5.2v-.8l1.4-.5v-7.3h-2.6l-.5 1.3h-.9z" fill="#d8d8d8"/>
<path d="M24.6 390v2.8h-2.8z" fill="#bdbdbd"/>
<path d="M12.3 399.5v11.5l2.8-2.6 2.2 4 1.7-.9-2.2-3.9 3.6-.3z" fill="#d8d8d8"/><path d="M13.2 401.6v7.3l1.8-1.7" fill="#2a2a2a"/>
<path d="M24.6 409.6v2.8h-2.8z" fill="#bdbdbd"/>
<path d="M9.5 429.8l11.5-10.4" stroke="#d8d8d8" stroke-width="1.1"/>
<path d="M24.6 429v2.8h-2.8z" fill="#bdbdbd"/>
<path d="M13.2 450.8c-1.4-1-3-2.6-4-3.8-.5-.7.3-1.5 1-.9l2.2 1.8v-6.4c0-.8 1.3-.8 1.3 0v4.2-5.6c0-.8 1.3-.8 1.3 0v5.4-5.8c0-.8 1.3-.8 1.3 0v5.8-5c0-.8 1.3-.8 1.3 0v5.4l.4.2.9-2.2c.3-.8 1.4-.5 1.2.3l-.9 4.4c-.4 1.8-1.5 3.2-3.6 3.2z" fill="#d8d8d8"/><path d="M14.35 443.5v2.5M15.65 443.2v2.6M16.95 443.6v2.4" stroke="#535353" stroke-width=".35"/>
<path d="M24.400000000000002 448.4v2.8h-2.8z" fill="#bdbdbd"/>
<circle cx="14.2" cy="462.6" r="4.4" fill="none" stroke="#d8d8d8" stroke-width="1.2"/><path d="M17.3 465.7l3.8 3.9" stroke="#d8d8d8" stroke-width="1.9"/>
<g fill="#d8d8d8"><circle cx="10" cy="483.8" r="1.4"/><circle cx="15" cy="483.8" r="1.4"/><circle cx="20" cy="483.8" r="1.4"/></g>
<path d="M24.6 487.6v2.8h-2.8z" fill="#bdbdbd"/>
<rect x="6.6" y="500.2" width="5.2" height="5.2" fill="#f0f0f0"/><rect x="3.8" y="497.6" width="5.2" height="5.2" fill="#111" stroke="#f0f0f0" stroke-width=".7"/>
<path d="M17 498.2l-1.4 1.4 1.4 1.4M15.8 499.6h5.2c1.3 0 2 .7 2 2v3.5M21.6 503.8l1.4 1.4 1.4-1.4" fill="none" stroke="#d8d8d8" stroke-width="1"/>
<rect x="10.9" y="517.2" width="14" height="13" fill="#ffffff" stroke="#7a7a7a" stroke-width=".5"/><rect x="3.9" y="510.2" width="12.8" height="12.4" fill="#a9d4e2" stroke="#f2f2f2" stroke-width="1.2"/>
<rect x="8.8" y="539.5" width="12" height="9" fill="none" stroke="#d8d8d8" stroke-width="1.1"/><circle cx="14.8" cy="544" r="2.5" fill="none" stroke="#d8d8d8" stroke-width="1"/></svg>
<div class="t" style="left:6.4px;top:5.2px;font-size:6.6px;color:#31a8ff;font-weight:bold;letter-spacing:-.2px">Ps</div>
<div class="t" style="left:26.6px;top:4.9px;font-size:8.7px;color:#e0e0e0;font-weight:normal;">File</div>
<div class="t" style="left:48.5px;top:4.9px;font-size:8.7px;color:#e0e0e0;font-weight:normal;">Edit</div>
<div class="t" style="left:72.8px;top:4.9px;font-size:8.7px;color:#e0e0e0;font-weight:normal;">Image</div>
<div class="t" style="left:106px;top:4.9px;font-size:8.7px;color:#e0e0e0;font-weight:normal;">Layer</div>
<div class="t" style="left:136px;top:4.9px;font-size:8.7px;color:#e0e0e0;font-weight:normal;">Type</div>
<div class="t" style="left:163.9px;top:4.9px;font-size:8.7px;color:#e0e0e0;font-weight:normal;">Select</div>
<div class="t" style="left:196.6px;top:4.9px;font-size:8.7px;color:#e0e0e0;font-weight:normal;">Filter</div>
<div class="t" style="left:224.2px;top:4.9px;font-size:8.7px;color:#e0e0e0;font-weight:normal;">3D</div>
<div class="t" style="left:245px;top:4.9px;font-size:8.7px;color:#e0e0e0;font-weight:normal;">View</div>
<div class="t" style="left:272.6px;top:4.9px;font-size:8.7px;color:#e0e0e0;font-weight:normal;">Window</div>
<div class="t" style="left:314.8px;top:4.9px;font-size:8.7px;color:#e0e0e0;font-weight:normal;">Help</div>
<div class="t" style="left:93px;top:28px;font-size:8px;color:#d8d8d8;font-weight:normal;letter-spacing:-0.3px">Auto-Select:</div>
<div class="t" style="left:151.5px;top:28.8px;font-size:7.8px;color:#e0e0e0;font-weight:normal;letter-spacing:-0.2px">Layer</div>
<div class="t" style="left:209.3px;top:28px;font-size:8px;color:#d8d8d8;font-weight:normal;letter-spacing:-0.28px">Show Transform Controls</div>
<div class="t" style="left:538.5px;top:27.5px;font-size:7.6px;color:#7c7c7c;font-weight:normal;">3D Mode:</div>
<div class="t" style="left:38.2px;top:51px;font-size:8px;color:#e8e8e8;font-weight:bold;letter-spacing:.16px">Untitled-1 @ 33.3% (Layer 1, RGB/8#) *</div>
<div class="t" style="left:35.9px;top:404.6px;font-size:7.3px;color:#d0d0d0;font-weight:normal;">33.33%</div>
<div class="t" style="left:86.7px;top:404.6px;font-size:7.3px;color:#d0d0d0;font-weight:normal;">1920 px x 1080 px (72 ppi)</div>
<div class="t" style="left:37.5px;top:421.3px;font-size:8px;color:#e8e8e8;font-weight:bold">Timeline</div>
<div class="t" style="left:50.4px;top:477.5px;font-size:8px;color:#d8e2ea;font-weight:bold">Layer 1</div>
<div class="t" style="left:99.9px;top:500.6px;font-size:8px;color:#e6e6e6;font-weight:bold">Transform</div>
<div class="t" style="left:99.2px;top:514.6px;font-size:8px;color:#dcdcdc;font-weight:normal;">Opacity</div>
<div class="t" style="left:274.0px;top:439px;width:10px;text-align:center;font-size:7.3px;color:#d0d0d0">15f</div>
<div class="t" style="left:309.4px;top:439px;width:26px;text-align:center;font-size:7.3px;color:#d0d0d0">01:00f</div>
<div class="t" style="left:361.4px;top:439px;width:10px;text-align:center;font-size:7.3px;color:#d0d0d0">15f</div>
<div class="t" style="left:397.3px;top:439px;width:26px;text-align:center;font-size:7.3px;color:#d0d0d0">02:00f</div>
<div class="t" style="left:449.7px;top:439px;width:10px;text-align:center;font-size:7.3px;color:#d0d0d0">15f</div>
<div class="t" style="left:485.5px;top:439px;width:26px;text-align:center;font-size:7.3px;color:#d0d0d0">03:00f</div>
<div class="t" style="left:537.4px;top:439px;width:10px;text-align:center;font-size:7.3px;color:#d0d0d0">15f</div>
<div class="t" style="left:573.3px;top:439px;width:26px;text-align:center;font-size:7.3px;color:#d0d0d0">04:00f</div>
<div class="t" style="left:625.2px;top:439px;width:10px;text-align:center;font-size:7.3px;color:#d0d0d0">15f</div>
<div class="t" style="left:669px;top:439px;width:11.6px;overflow:hidden;font-size:7.3px;color:#d0d0d0">05:00f</div>
<div class="t" style="left:297.6px;top:469.5px;font-size:8px;color:#f4f4f4;font-weight:bold">Layer 1</div>
<div class="t" style="left:102px;top:533.4px;font-size:8px;color:#e6e6e6;font-weight:bold;letter-spacing:-.1px">0;00;00;00</div>
<div class="t" style="left:180.1px;top:533.4px;font-size:8px;color:#d6d6d6;font-weight:normal;">(29.97 fps)</div>
<div class="t" style="left:751.9px;top:59.2px;font-size:7.3px;color:#f0f0f0;font-weight:bold">Color</div>
<div class="t" style="left:783.4px;top:59.2px;font-size:7.3px;color:#b4b4b4;font-weight:bold">Swatches</div>
<div class="t" style="left:829px;top:59.2px;font-size:7.3px;color:#b4b4b4;font-weight:bold">Gradients</div>
<div class="t" style="left:876.4px;top:59.2px;font-size:7.3px;color:#b4b4b4;font-weight:bold">Patterns</div>
<div class="t" style="left:751.7px;top:219.2px;font-size:7.3px;color:#b4b4b4;font-weight:bold">Learn</div>
<div class="t" style="left:784.9px;top:219.2px;font-size:7.3px;color:#b4b4b4;font-weight:bold">Libraries</div>
<div class="t" style="left:828.4px;top:219.2px;font-size:7.3px;color:#f0f0f0;font-weight:bold">Adjustments</div>
<div class="t" style="left:752px;top:240px;font-size:7.6px;color:#d4d4d4;font-weight:normal;">Add an adjustment</div>
<div class="t" style="left:752px;top:380.2px;font-size:7.3px;color:#f0f0f0;font-weight:bold">Layers</div>
<div class="t" style="left:787px;top:380.2px;font-size:7.3px;color:#b4b4b4;font-weight:bold">Channels</div>
<div class="t" style="left:831.7px;top:380.2px;font-size:7.3px;color:#b4b4b4;font-weight:bold">Paths</div>
<div class="t" style="left:764.2px;top:404.2px;font-size:8px;color:#dcdcdc;font-weight:normal;">Kind</div>
<div class="t" style="left:753px;top:426px;font-size:8px;color:#dcdcdc;font-weight:normal;">Normal</div>
<div class="t" style="left:849.4px;top:426.2px;font-size:8px;color:#d0d0d0;font-weight:normal;letter-spacing:-.3px">Opacity:</div>
<div class="t" style="left:884px;top:425.8px;font-size:8px;color:#dcdcdc;font-weight:normal;letter-spacing:-.35px">100%</div>
<div class="t" style="left:749.4px;top:446.7px;font-size:8px;color:#cccccc;font-weight:normal;letter-spacing:-.2px">Lock:</div>
<div class="t" style="left:866px;top:446.7px;font-size:8px;color:#d0d0d0;font-weight:normal;letter-spacing:-.3px">Fill:</div>
<div class="t" style="left:884px;top:446.6px;font-size:8px;color:#dcdcdc;font-weight:normal;letter-spacing:-.35px">100%</div>
<div class="t" style="left:801.4px;top:469.2px;font-size:8px;color:#e6e6e6;font-weight:normal;">Layer 1</div>
<div class="t" style="left:801.4px;top:490.3px;font-size:8px;color:#e0e0e0;font-weight:normal;">Layer 0</div>
<div class="t" style="left:892.4px;top:529.6px;font-size:10px;color:#e0e0e0;font-style:italic;font-family:'Liberation Serif',serif">fx</div>
</body></html>
